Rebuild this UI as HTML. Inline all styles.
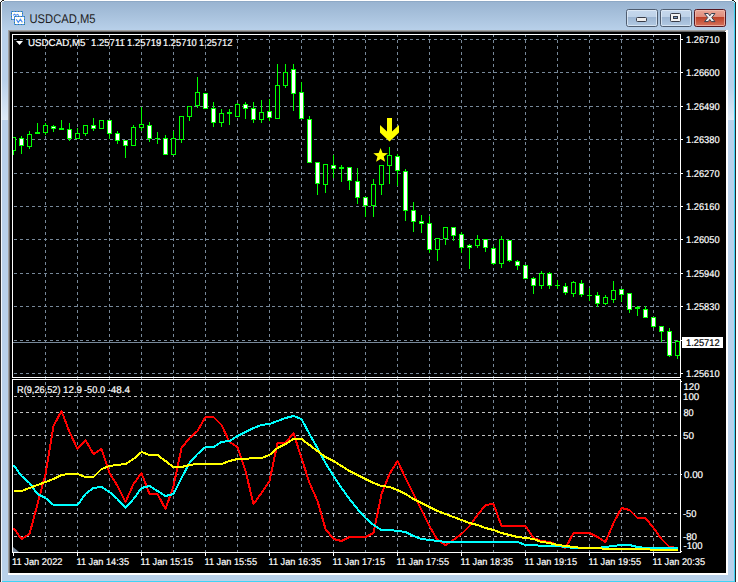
<!DOCTYPE html><html><head><meta charset="utf-8"><style>
html,body{margin:0;padding:0;width:738px;height:582px;overflow:hidden;background:#fff;}
svg{display:block;}
text{font-family:"Liberation Sans",sans-serif;text-rendering:geometricPrecision;}
</style></head><body>
<svg width="738" height="582" viewBox="0 0 738 582">
<defs><linearGradient id="tg" x1="0" y1="0" x2="0" y2="1"><stop offset="0" stop-color="#98b3d0"/><stop offset="1" stop-color="#b9d1ea"/></linearGradient><linearGradient id="btn" x1="0" y1="0" x2="0" y2="1"><stop offset="0" stop-color="#c6d8ed"/><stop offset="0.46" stop-color="#bed2e8"/><stop offset="0.47" stop-color="#9db6d3"/><stop offset="1" stop-color="#b4cbe4"/></linearGradient><linearGradient id="cls" x1="0" y1="0" x2="0" y2="1"><stop offset="0" stop-color="#eaa898"/><stop offset="0.46" stop-color="#de8b7b"/><stop offset="0.47" stop-color="#bd4128"/><stop offset="1" stop-color="#d77560"/></linearGradient></defs>
<g shape-rendering="crispEdges">
<rect x="0" y="1" width="736" height="581" fill="#b9d1ea"/>
<rect x="0" y="1" width="736" height="30" fill="url(#tg)"/>
<rect x="0" y="1" width="736" height="1" fill="#8ea9c6"/>
<rect x="0" y="2" width="1" height="580" fill="#2a2a2a"/>
<rect x="0" y="0" width="2" height="2" fill="#fff"/>
<rect x="2" y="0" width="2" height="1" fill="#1a1a1a"/><rect x="1" y="1" width="1" height="1" fill="#1a1a1a"/><rect x="0" y="2" width="1" height="1" fill="#1a1a1a"/>
<rect x="2" y="1" width="2" height="1" fill="#f0f4f8"/>
<rect x="734" y="0" width="4" height="3" fill="#fff"/>
<rect x="732" y="0" width="2" height="1" fill="#1a1a1a"/><rect x="734" y="1" width="1" height="1" fill="#1a1a1a"/><rect x="735" y="2" width="1" height="1" fill="#1a1a1a"/>
<rect x="732" y="1" width="2" height="1" fill="#bdeefa"/><rect x="734" y="2" width="1" height="1" fill="#bdeefa"/>
<rect x="1" y="2" width="1" height="580" fill="#f4f8fc"/>
<rect x="734" y="3" width="1" height="579" fill="#3fd3f5"/>
<rect x="735" y="3" width="1" height="579" fill="#2a2a2a"/>
<rect x="2" y="581" width="732" height="1" fill="#3fd3f5"/>
<linearGradient id="glow" x1="0" y1="0" x2="0" y2="1"><stop offset="0" stop-color="#dde9f5" stop-opacity="0"/><stop offset="1" stop-color="#dde9f5" stop-opacity="1"/></linearGradient>
<rect x="2" y="80" width="6" height="40" fill="url(#glow)"/>
<rect x="728" y="86" width="6" height="34" fill="url(#glow)"/>
<rect x="8" y="30" width="720" height="545" fill="#ffffff"/>
<rect x="8" y="30" width="718" height="1" fill="#a0a0a0"/>
<rect x="8" y="30" width="1" height="543" fill="#a0a0a0"/>
<rect x="9" y="31" width="716" height="1" fill="#696969"/>
<rect x="9" y="31" width="1" height="542" fill="#696969"/>
<rect x="10" y="32" width="716" height="541" fill="#000"/>
</g>
<g shape-rendering="crispEdges">
<path d="M45 35h1v2h-1zM45 40h1v3h-1zM45 46h1v3h-1zM45 52h1v3h-1zM45 58h1v3h-1zM45 64h1v3h-1zM45 70h1v3h-1zM45 76h1v3h-1zM45 82h1v3h-1zM45 88h1v3h-1zM45 94h1v3h-1zM45 100h1v3h-1zM45 106h1v3h-1zM45 112h1v3h-1zM45 118h1v3h-1zM45 124h1v3h-1zM45 130h1v3h-1zM45 136h1v3h-1zM45 142h1v3h-1zM45 148h1v3h-1zM45 154h1v3h-1zM45 160h1v3h-1zM45 166h1v3h-1zM45 172h1v3h-1zM45 178h1v3h-1zM45 184h1v3h-1zM45 190h1v3h-1zM45 196h1v3h-1zM45 202h1v3h-1zM45 208h1v3h-1zM45 214h1v3h-1zM45 220h1v3h-1zM45 226h1v3h-1zM45 232h1v3h-1zM45 238h1v3h-1zM45 244h1v3h-1zM45 250h1v3h-1zM45 256h1v3h-1zM45 262h1v3h-1zM45 268h1v3h-1zM45 274h1v3h-1zM45 280h1v3h-1zM45 286h1v3h-1zM45 292h1v3h-1zM45 298h1v3h-1zM45 304h1v3h-1zM45 310h1v3h-1zM45 316h1v3h-1zM45 322h1v3h-1zM45 328h1v3h-1zM45 334h1v3h-1zM45 340h1v3h-1zM45 346h1v3h-1zM45 352h1v3h-1zM45 358h1v3h-1zM45 364h1v3h-1zM45 370h1v3h-1zM45 376h1v3h-1zM45 382h1v3h-1zM45 388h1v3h-1zM45 394h1v3h-1zM45 400h1v3h-1zM45 406h1v3h-1zM45 412h1v3h-1zM45 418h1v3h-1zM45 424h1v3h-1zM45 430h1v3h-1zM45 436h1v3h-1zM45 442h1v3h-1zM45 448h1v3h-1zM45 454h1v3h-1zM45 460h1v3h-1zM45 466h1v3h-1zM45 472h1v3h-1zM45 478h1v3h-1zM45 484h1v3h-1zM45 490h1v3h-1zM45 496h1v3h-1zM45 502h1v3h-1zM45 508h1v3h-1zM45 514h1v3h-1zM45 520h1v3h-1zM45 526h1v3h-1zM45 532h1v3h-1zM45 538h1v3h-1zM45 544h1v3h-1zM45 550h1v2h-1z" fill="#778899"/>
<path d="M77 35h1v2h-1zM77 40h1v3h-1zM77 46h1v3h-1zM77 52h1v3h-1zM77 58h1v3h-1zM77 64h1v3h-1zM77 70h1v3h-1zM77 76h1v3h-1zM77 82h1v3h-1zM77 88h1v3h-1zM77 94h1v3h-1zM77 100h1v3h-1zM77 106h1v3h-1zM77 112h1v3h-1zM77 118h1v3h-1zM77 124h1v3h-1zM77 130h1v3h-1zM77 136h1v3h-1zM77 142h1v3h-1zM77 148h1v3h-1zM77 154h1v3h-1zM77 160h1v3h-1zM77 166h1v3h-1zM77 172h1v3h-1zM77 178h1v3h-1zM77 184h1v3h-1zM77 190h1v3h-1zM77 196h1v3h-1zM77 202h1v3h-1zM77 208h1v3h-1zM77 214h1v3h-1zM77 220h1v3h-1zM77 226h1v3h-1zM77 232h1v3h-1zM77 238h1v3h-1zM77 244h1v3h-1zM77 250h1v3h-1zM77 256h1v3h-1zM77 262h1v3h-1zM77 268h1v3h-1zM77 274h1v3h-1zM77 280h1v3h-1zM77 286h1v3h-1zM77 292h1v3h-1zM77 298h1v3h-1zM77 304h1v3h-1zM77 310h1v3h-1zM77 316h1v3h-1zM77 322h1v3h-1zM77 328h1v3h-1zM77 334h1v3h-1zM77 340h1v3h-1zM77 346h1v3h-1zM77 352h1v3h-1zM77 358h1v3h-1zM77 364h1v3h-1zM77 370h1v3h-1zM77 376h1v3h-1zM77 382h1v3h-1zM77 388h1v3h-1zM77 394h1v3h-1zM77 400h1v3h-1zM77 406h1v3h-1zM77 412h1v3h-1zM77 418h1v3h-1zM77 424h1v3h-1zM77 430h1v3h-1zM77 436h1v3h-1zM77 442h1v3h-1zM77 448h1v3h-1zM77 454h1v3h-1zM77 460h1v3h-1zM77 466h1v3h-1zM77 472h1v3h-1zM77 478h1v3h-1zM77 484h1v3h-1zM77 490h1v3h-1zM77 496h1v3h-1zM77 502h1v3h-1zM77 508h1v3h-1zM77 514h1v3h-1zM77 520h1v3h-1zM77 526h1v3h-1zM77 532h1v3h-1zM77 538h1v3h-1zM77 544h1v3h-1zM77 550h1v2h-1z" fill="#778899"/>
<path d="M109 35h1v2h-1zM109 40h1v3h-1zM109 46h1v3h-1zM109 52h1v3h-1zM109 58h1v3h-1zM109 64h1v3h-1zM109 70h1v3h-1zM109 76h1v3h-1zM109 82h1v3h-1zM109 88h1v3h-1zM109 94h1v3h-1zM109 100h1v3h-1zM109 106h1v3h-1zM109 112h1v3h-1zM109 118h1v3h-1zM109 124h1v3h-1zM109 130h1v3h-1zM109 136h1v3h-1zM109 142h1v3h-1zM109 148h1v3h-1zM109 154h1v3h-1zM109 160h1v3h-1zM109 166h1v3h-1zM109 172h1v3h-1zM109 178h1v3h-1zM109 184h1v3h-1zM109 190h1v3h-1zM109 196h1v3h-1zM109 202h1v3h-1zM109 208h1v3h-1zM109 214h1v3h-1zM109 220h1v3h-1zM109 226h1v3h-1zM109 232h1v3h-1zM109 238h1v3h-1zM109 244h1v3h-1zM109 250h1v3h-1zM109 256h1v3h-1zM109 262h1v3h-1zM109 268h1v3h-1zM109 274h1v3h-1zM109 280h1v3h-1zM109 286h1v3h-1zM109 292h1v3h-1zM109 298h1v3h-1zM109 304h1v3h-1zM109 310h1v3h-1zM109 316h1v3h-1zM109 322h1v3h-1zM109 328h1v3h-1zM109 334h1v3h-1zM109 340h1v3h-1zM109 346h1v3h-1zM109 352h1v3h-1zM109 358h1v3h-1zM109 364h1v3h-1zM109 370h1v3h-1zM109 376h1v3h-1zM109 382h1v3h-1zM109 388h1v3h-1zM109 394h1v3h-1zM109 400h1v3h-1zM109 406h1v3h-1zM109 412h1v3h-1zM109 418h1v3h-1zM109 424h1v3h-1zM109 430h1v3h-1zM109 436h1v3h-1zM109 442h1v3h-1zM109 448h1v3h-1zM109 454h1v3h-1zM109 460h1v3h-1zM109 466h1v3h-1zM109 472h1v3h-1zM109 478h1v3h-1zM109 484h1v3h-1zM109 490h1v3h-1zM109 496h1v3h-1zM109 502h1v3h-1zM109 508h1v3h-1zM109 514h1v3h-1zM109 520h1v3h-1zM109 526h1v3h-1zM109 532h1v3h-1zM109 538h1v3h-1zM109 544h1v3h-1zM109 550h1v2h-1z" fill="#778899"/>
<path d="M141 35h1v2h-1zM141 40h1v3h-1zM141 46h1v3h-1zM141 52h1v3h-1zM141 58h1v3h-1zM141 64h1v3h-1zM141 70h1v3h-1zM141 76h1v3h-1zM141 82h1v3h-1zM141 88h1v3h-1zM141 94h1v3h-1zM141 100h1v3h-1zM141 106h1v3h-1zM141 112h1v3h-1zM141 118h1v3h-1zM141 124h1v3h-1zM141 130h1v3h-1zM141 136h1v3h-1zM141 142h1v3h-1zM141 148h1v3h-1zM141 154h1v3h-1zM141 160h1v3h-1zM141 166h1v3h-1zM141 172h1v3h-1zM141 178h1v3h-1zM141 184h1v3h-1zM141 190h1v3h-1zM141 196h1v3h-1zM141 202h1v3h-1zM141 208h1v3h-1zM141 214h1v3h-1zM141 220h1v3h-1zM141 226h1v3h-1zM141 232h1v3h-1zM141 238h1v3h-1zM141 244h1v3h-1zM141 250h1v3h-1zM141 256h1v3h-1zM141 262h1v3h-1zM141 268h1v3h-1zM141 274h1v3h-1zM141 280h1v3h-1zM141 286h1v3h-1zM141 292h1v3h-1zM141 298h1v3h-1zM141 304h1v3h-1zM141 310h1v3h-1zM141 316h1v3h-1zM141 322h1v3h-1zM141 328h1v3h-1zM141 334h1v3h-1zM141 340h1v3h-1zM141 346h1v3h-1zM141 352h1v3h-1zM141 358h1v3h-1zM141 364h1v3h-1zM141 370h1v3h-1zM141 376h1v3h-1zM141 382h1v3h-1zM141 388h1v3h-1zM141 394h1v3h-1zM141 400h1v3h-1zM141 406h1v3h-1zM141 412h1v3h-1zM141 418h1v3h-1zM141 424h1v3h-1zM141 430h1v3h-1zM141 436h1v3h-1zM141 442h1v3h-1zM141 448h1v3h-1zM141 454h1v3h-1zM141 460h1v3h-1zM141 466h1v3h-1zM141 472h1v3h-1zM141 478h1v3h-1zM141 484h1v3h-1zM141 490h1v3h-1zM141 496h1v3h-1zM141 502h1v3h-1zM141 508h1v3h-1zM141 514h1v3h-1zM141 520h1v3h-1zM141 526h1v3h-1zM141 532h1v3h-1zM141 538h1v3h-1zM141 544h1v3h-1zM141 550h1v2h-1z" fill="#778899"/>
<path d="M173 35h1v2h-1zM173 40h1v3h-1zM173 46h1v3h-1zM173 52h1v3h-1zM173 58h1v3h-1zM173 64h1v3h-1zM173 70h1v3h-1zM173 76h1v3h-1zM173 82h1v3h-1zM173 88h1v3h-1zM173 94h1v3h-1zM173 100h1v3h-1zM173 106h1v3h-1zM173 112h1v3h-1zM173 118h1v3h-1zM173 124h1v3h-1zM173 130h1v3h-1zM173 136h1v3h-1zM173 142h1v3h-1zM173 148h1v3h-1zM173 154h1v3h-1zM173 160h1v3h-1zM173 166h1v3h-1zM173 172h1v3h-1zM173 178h1v3h-1zM173 184h1v3h-1zM173 190h1v3h-1zM173 196h1v3h-1zM173 202h1v3h-1zM173 208h1v3h-1zM173 214h1v3h-1zM173 220h1v3h-1zM173 226h1v3h-1zM173 232h1v3h-1zM173 238h1v3h-1zM173 244h1v3h-1zM173 250h1v3h-1zM173 256h1v3h-1zM173 262h1v3h-1zM173 268h1v3h-1zM173 274h1v3h-1zM173 280h1v3h-1zM173 286h1v3h-1zM173 292h1v3h-1zM173 298h1v3h-1zM173 304h1v3h-1zM173 310h1v3h-1zM173 316h1v3h-1zM173 322h1v3h-1zM173 328h1v3h-1zM173 334h1v3h-1zM173 340h1v3h-1zM173 346h1v3h-1zM173 352h1v3h-1zM173 358h1v3h-1zM173 364h1v3h-1zM173 370h1v3h-1zM173 376h1v3h-1zM173 382h1v3h-1zM173 388h1v3h-1zM173 394h1v3h-1zM173 400h1v3h-1zM173 406h1v3h-1zM173 412h1v3h-1zM173 418h1v3h-1zM173 424h1v3h-1zM173 430h1v3h-1zM173 436h1v3h-1zM173 442h1v3h-1zM173 448h1v3h-1zM173 454h1v3h-1zM173 460h1v3h-1zM173 466h1v3h-1zM173 472h1v3h-1zM173 478h1v3h-1zM173 484h1v3h-1zM173 490h1v3h-1zM173 496h1v3h-1zM173 502h1v3h-1zM173 508h1v3h-1zM173 514h1v3h-1zM173 520h1v3h-1zM173 526h1v3h-1zM173 532h1v3h-1zM173 538h1v3h-1zM173 544h1v3h-1zM173 550h1v2h-1z" fill="#778899"/>
<path d="M205 35h1v2h-1zM205 40h1v3h-1zM205 46h1v3h-1zM205 52h1v3h-1zM205 58h1v3h-1zM205 64h1v3h-1zM205 70h1v3h-1zM205 76h1v3h-1zM205 82h1v3h-1zM205 88h1v3h-1zM205 94h1v3h-1zM205 100h1v3h-1zM205 106h1v3h-1zM205 112h1v3h-1zM205 118h1v3h-1zM205 124h1v3h-1zM205 130h1v3h-1zM205 136h1v3h-1zM205 142h1v3h-1zM205 148h1v3h-1zM205 154h1v3h-1zM205 160h1v3h-1zM205 166h1v3h-1zM205 172h1v3h-1zM205 178h1v3h-1zM205 184h1v3h-1zM205 190h1v3h-1zM205 196h1v3h-1zM205 202h1v3h-1zM205 208h1v3h-1zM205 214h1v3h-1zM205 220h1v3h-1zM205 226h1v3h-1zM205 232h1v3h-1zM205 238h1v3h-1zM205 244h1v3h-1zM205 250h1v3h-1zM205 256h1v3h-1zM205 262h1v3h-1zM205 268h1v3h-1zM205 274h1v3h-1zM205 280h1v3h-1zM205 286h1v3h-1zM205 292h1v3h-1zM205 298h1v3h-1zM205 304h1v3h-1zM205 310h1v3h-1zM205 316h1v3h-1zM205 322h1v3h-1zM205 328h1v3h-1zM205 334h1v3h-1zM205 340h1v3h-1zM205 346h1v3h-1zM205 352h1v3h-1zM205 358h1v3h-1zM205 364h1v3h-1zM205 370h1v3h-1zM205 376h1v3h-1zM205 382h1v3h-1zM205 388h1v3h-1zM205 394h1v3h-1zM205 400h1v3h-1zM205 406h1v3h-1zM205 412h1v3h-1zM205 418h1v3h-1zM205 424h1v3h-1zM205 430h1v3h-1zM205 436h1v3h-1zM205 442h1v3h-1zM205 448h1v3h-1zM205 454h1v3h-1zM205 460h1v3h-1zM205 466h1v3h-1zM205 472h1v3h-1zM205 478h1v3h-1zM205 484h1v3h-1zM205 490h1v3h-1zM205 496h1v3h-1zM205 502h1v3h-1zM205 508h1v3h-1zM205 514h1v3h-1zM205 520h1v3h-1zM205 526h1v3h-1zM205 532h1v3h-1zM205 538h1v3h-1zM205 544h1v3h-1zM205 550h1v2h-1z" fill="#778899"/>
<path d="M237 35h1v2h-1zM237 40h1v3h-1zM237 46h1v3h-1zM237 52h1v3h-1zM237 58h1v3h-1zM237 64h1v3h-1zM237 70h1v3h-1zM237 76h1v3h-1zM237 82h1v3h-1zM237 88h1v3h-1zM237 94h1v3h-1zM237 100h1v3h-1zM237 106h1v3h-1zM237 112h1v3h-1zM237 118h1v3h-1zM237 124h1v3h-1zM237 130h1v3h-1zM237 136h1v3h-1zM237 142h1v3h-1zM237 148h1v3h-1zM237 154h1v3h-1zM237 160h1v3h-1zM237 166h1v3h-1zM237 172h1v3h-1zM237 178h1v3h-1zM237 184h1v3h-1zM237 190h1v3h-1zM237 196h1v3h-1zM237 202h1v3h-1zM237 208h1v3h-1zM237 214h1v3h-1zM237 220h1v3h-1zM237 226h1v3h-1zM237 232h1v3h-1zM237 238h1v3h-1zM237 244h1v3h-1zM237 250h1v3h-1zM237 256h1v3h-1zM237 262h1v3h-1zM237 268h1v3h-1zM237 274h1v3h-1zM237 280h1v3h-1zM237 286h1v3h-1zM237 292h1v3h-1zM237 298h1v3h-1zM237 304h1v3h-1zM237 310h1v3h-1zM237 316h1v3h-1zM237 322h1v3h-1zM237 328h1v3h-1zM237 334h1v3h-1zM237 340h1v3h-1zM237 346h1v3h-1zM237 352h1v3h-1zM237 358h1v3h-1zM237 364h1v3h-1zM237 370h1v3h-1zM237 376h1v3h-1zM237 382h1v3h-1zM237 388h1v3h-1zM237 394h1v3h-1zM237 400h1v3h-1zM237 406h1v3h-1zM237 412h1v3h-1zM237 418h1v3h-1zM237 424h1v3h-1zM237 430h1v3h-1zM237 436h1v3h-1zM237 442h1v3h-1zM237 448h1v3h-1zM237 454h1v3h-1zM237 460h1v3h-1zM237 466h1v3h-1zM237 472h1v3h-1zM237 478h1v3h-1zM237 484h1v3h-1zM237 490h1v3h-1zM237 496h1v3h-1zM237 502h1v3h-1zM237 508h1v3h-1zM237 514h1v3h-1zM237 520h1v3h-1zM237 526h1v3h-1zM237 532h1v3h-1zM237 538h1v3h-1zM237 544h1v3h-1zM237 550h1v2h-1z" fill="#778899"/>
<path d="M269 35h1v2h-1zM269 40h1v3h-1zM269 46h1v3h-1zM269 52h1v3h-1zM269 58h1v3h-1zM269 64h1v3h-1zM269 70h1v3h-1zM269 76h1v3h-1zM269 82h1v3h-1zM269 88h1v3h-1zM269 94h1v3h-1zM269 100h1v3h-1zM269 106h1v3h-1zM269 112h1v3h-1zM269 118h1v3h-1zM269 124h1v3h-1zM269 130h1v3h-1zM269 136h1v3h-1zM269 142h1v3h-1zM269 148h1v3h-1zM269 154h1v3h-1zM269 160h1v3h-1zM269 166h1v3h-1zM269 172h1v3h-1zM269 178h1v3h-1zM269 184h1v3h-1zM269 190h1v3h-1zM269 196h1v3h-1zM269 202h1v3h-1zM269 208h1v3h-1zM269 214h1v3h-1zM269 220h1v3h-1zM269 226h1v3h-1zM269 232h1v3h-1zM269 238h1v3h-1zM269 244h1v3h-1zM269 250h1v3h-1zM269 256h1v3h-1zM269 262h1v3h-1zM269 268h1v3h-1zM269 274h1v3h-1zM269 280h1v3h-1zM269 286h1v3h-1zM269 292h1v3h-1zM269 298h1v3h-1zM269 304h1v3h-1zM269 310h1v3h-1zM269 316h1v3h-1zM269 322h1v3h-1zM269 328h1v3h-1zM269 334h1v3h-1zM269 340h1v3h-1zM269 346h1v3h-1zM269 352h1v3h-1zM269 358h1v3h-1zM269 364h1v3h-1zM269 370h1v3h-1zM269 376h1v3h-1zM269 382h1v3h-1zM269 388h1v3h-1zM269 394h1v3h-1zM269 400h1v3h-1zM269 406h1v3h-1zM269 412h1v3h-1zM269 418h1v3h-1zM269 424h1v3h-1zM269 430h1v3h-1zM269 436h1v3h-1zM269 442h1v3h-1zM269 448h1v3h-1zM269 454h1v3h-1zM269 460h1v3h-1zM269 466h1v3h-1zM269 472h1v3h-1zM269 478h1v3h-1zM269 484h1v3h-1zM269 490h1v3h-1zM269 496h1v3h-1zM269 502h1v3h-1zM269 508h1v3h-1zM269 514h1v3h-1zM269 520h1v3h-1zM269 526h1v3h-1zM269 532h1v3h-1zM269 538h1v3h-1zM269 544h1v3h-1zM269 550h1v2h-1z" fill="#778899"/>
<path d="M301 35h1v2h-1zM301 40h1v3h-1zM301 46h1v3h-1zM301 52h1v3h-1zM301 58h1v3h-1zM301 64h1v3h-1zM301 70h1v3h-1zM301 76h1v3h-1zM301 82h1v3h-1zM301 88h1v3h-1zM301 94h1v3h-1zM301 100h1v3h-1zM301 106h1v3h-1zM301 112h1v3h-1zM301 118h1v3h-1zM301 124h1v3h-1zM301 130h1v3h-1zM301 136h1v3h-1zM301 142h1v3h-1zM301 148h1v3h-1zM301 154h1v3h-1zM301 160h1v3h-1zM301 166h1v3h-1zM301 172h1v3h-1zM301 178h1v3h-1zM301 184h1v3h-1zM301 190h1v3h-1zM301 196h1v3h-1zM301 202h1v3h-1zM301 208h1v3h-1zM301 214h1v3h-1zM301 220h1v3h-1zM301 226h1v3h-1zM301 232h1v3h-1zM301 238h1v3h-1zM301 244h1v3h-1zM301 250h1v3h-1zM301 256h1v3h-1zM301 262h1v3h-1zM301 268h1v3h-1zM301 274h1v3h-1zM301 280h1v3h-1zM301 286h1v3h-1zM301 292h1v3h-1zM301 298h1v3h-1zM301 304h1v3h-1zM301 310h1v3h-1zM301 316h1v3h-1zM301 322h1v3h-1zM301 328h1v3h-1zM301 334h1v3h-1zM301 340h1v3h-1zM301 346h1v3h-1zM301 352h1v3h-1zM301 358h1v3h-1zM301 364h1v3h-1zM301 370h1v3h-1zM301 376h1v3h-1zM301 382h1v3h-1zM301 388h1v3h-1zM301 394h1v3h-1zM301 400h1v3h-1zM301 406h1v3h-1zM301 412h1v3h-1zM301 418h1v3h-1zM301 424h1v3h-1zM301 430h1v3h-1zM301 436h1v3h-1zM301 442h1v3h-1zM301 448h1v3h-1zM301 454h1v3h-1zM301 460h1v3h-1zM301 466h1v3h-1zM301 472h1v3h-1zM301 478h1v3h-1zM301 484h1v3h-1zM301 490h1v3h-1zM301 496h1v3h-1zM301 502h1v3h-1zM301 508h1v3h-1zM301 514h1v3h-1zM301 520h1v3h-1zM301 526h1v3h-1zM301 532h1v3h-1zM301 538h1v3h-1zM301 544h1v3h-1zM301 550h1v2h-1z" fill="#778899"/>
<path d="M333 35h1v2h-1zM333 40h1v3h-1zM333 46h1v3h-1zM333 52h1v3h-1zM333 58h1v3h-1zM333 64h1v3h-1zM333 70h1v3h-1zM333 76h1v3h-1zM333 82h1v3h-1zM333 88h1v3h-1zM333 94h1v3h-1zM333 100h1v3h-1zM333 106h1v3h-1zM333 112h1v3h-1zM333 118h1v3h-1zM333 124h1v3h-1zM333 130h1v3h-1zM333 136h1v3h-1zM333 142h1v3h-1zM333 148h1v3h-1zM333 154h1v3h-1zM333 160h1v3h-1zM333 166h1v3h-1zM333 172h1v3h-1zM333 178h1v3h-1zM333 184h1v3h-1zM333 190h1v3h-1zM333 196h1v3h-1zM333 202h1v3h-1zM333 208h1v3h-1zM333 214h1v3h-1zM333 220h1v3h-1zM333 226h1v3h-1zM333 232h1v3h-1zM333 238h1v3h-1zM333 244h1v3h-1zM333 250h1v3h-1zM333 256h1v3h-1zM333 262h1v3h-1zM333 268h1v3h-1zM333 274h1v3h-1zM333 280h1v3h-1zM333 286h1v3h-1zM333 292h1v3h-1zM333 298h1v3h-1zM333 304h1v3h-1zM333 310h1v3h-1zM333 316h1v3h-1zM333 322h1v3h-1zM333 328h1v3h-1zM333 334h1v3h-1zM333 340h1v3h-1zM333 346h1v3h-1zM333 352h1v3h-1zM333 358h1v3h-1zM333 364h1v3h-1zM333 370h1v3h-1zM333 376h1v3h-1zM333 382h1v3h-1zM333 388h1v3h-1zM333 394h1v3h-1zM333 400h1v3h-1zM333 406h1v3h-1zM333 412h1v3h-1zM333 418h1v3h-1zM333 424h1v3h-1zM333 430h1v3h-1zM333 436h1v3h-1zM333 442h1v3h-1zM333 448h1v3h-1zM333 454h1v3h-1zM333 460h1v3h-1zM333 466h1v3h-1zM333 472h1v3h-1zM333 478h1v3h-1zM333 484h1v3h-1zM333 490h1v3h-1zM333 496h1v3h-1zM333 502h1v3h-1zM333 508h1v3h-1zM333 514h1v3h-1zM333 520h1v3h-1zM333 526h1v3h-1zM333 532h1v3h-1zM333 538h1v3h-1zM333 544h1v3h-1zM333 550h1v2h-1z" fill="#778899"/>
<path d="M365 35h1v2h-1zM365 40h1v3h-1zM365 46h1v3h-1zM365 52h1v3h-1zM365 58h1v3h-1zM365 64h1v3h-1zM365 70h1v3h-1zM365 76h1v3h-1zM365 82h1v3h-1zM365 88h1v3h-1zM365 94h1v3h-1zM365 100h1v3h-1zM365 106h1v3h-1zM365 112h1v3h-1zM365 118h1v3h-1zM365 124h1v3h-1zM365 130h1v3h-1zM365 136h1v3h-1zM365 142h1v3h-1zM365 148h1v3h-1zM365 154h1v3h-1zM365 160h1v3h-1zM365 166h1v3h-1zM365 172h1v3h-1zM365 178h1v3h-1zM365 184h1v3h-1zM365 190h1v3h-1zM365 196h1v3h-1zM365 202h1v3h-1zM365 208h1v3h-1zM365 214h1v3h-1zM365 220h1v3h-1zM365 226h1v3h-1zM365 232h1v3h-1zM365 238h1v3h-1zM365 244h1v3h-1zM365 250h1v3h-1zM365 256h1v3h-1zM365 262h1v3h-1zM365 268h1v3h-1zM365 274h1v3h-1zM365 280h1v3h-1zM365 286h1v3h-1zM365 292h1v3h-1zM365 298h1v3h-1zM365 304h1v3h-1zM365 310h1v3h-1zM365 316h1v3h-1zM365 322h1v3h-1zM365 328h1v3h-1zM365 334h1v3h-1zM365 340h1v3h-1zM365 346h1v3h-1zM365 352h1v3h-1zM365 358h1v3h-1zM365 364h1v3h-1zM365 370h1v3h-1zM365 376h1v3h-1zM365 382h1v3h-1zM365 388h1v3h-1zM365 394h1v3h-1zM365 400h1v3h-1zM365 406h1v3h-1zM365 412h1v3h-1zM365 418h1v3h-1zM365 424h1v3h-1zM365 430h1v3h-1zM365 436h1v3h-1zM365 442h1v3h-1zM365 448h1v3h-1zM365 454h1v3h-1zM365 460h1v3h-1zM365 466h1v3h-1zM365 472h1v3h-1zM365 478h1v3h-1zM365 484h1v3h-1zM365 490h1v3h-1zM365 496h1v3h-1zM365 502h1v3h-1zM365 508h1v3h-1zM365 514h1v3h-1zM365 520h1v3h-1zM365 526h1v3h-1zM365 532h1v3h-1zM365 538h1v3h-1zM365 544h1v3h-1zM365 550h1v2h-1z" fill="#778899"/>
<path d="M397 35h1v2h-1zM397 40h1v3h-1zM397 46h1v3h-1zM397 52h1v3h-1zM397 58h1v3h-1zM397 64h1v3h-1zM397 70h1v3h-1zM397 76h1v3h-1zM397 82h1v3h-1zM397 88h1v3h-1zM397 94h1v3h-1zM397 100h1v3h-1zM397 106h1v3h-1zM397 112h1v3h-1zM397 118h1v3h-1zM397 124h1v3h-1zM397 130h1v3h-1zM397 136h1v3h-1zM397 142h1v3h-1zM397 148h1v3h-1zM397 154h1v3h-1zM397 160h1v3h-1zM397 166h1v3h-1zM397 172h1v3h-1zM397 178h1v3h-1zM397 184h1v3h-1zM397 190h1v3h-1zM397 196h1v3h-1zM397 202h1v3h-1zM397 208h1v3h-1zM397 214h1v3h-1zM397 220h1v3h-1zM397 226h1v3h-1zM397 232h1v3h-1zM397 238h1v3h-1zM397 244h1v3h-1zM397 250h1v3h-1zM397 256h1v3h-1zM397 262h1v3h-1zM397 268h1v3h-1zM397 274h1v3h-1zM397 280h1v3h-1zM397 286h1v3h-1zM397 292h1v3h-1zM397 298h1v3h-1zM397 304h1v3h-1zM397 310h1v3h-1zM397 316h1v3h-1zM397 322h1v3h-1zM397 328h1v3h-1zM397 334h1v3h-1zM397 340h1v3h-1zM397 346h1v3h-1zM397 352h1v3h-1zM397 358h1v3h-1zM397 364h1v3h-1zM397 370h1v3h-1zM397 376h1v3h-1zM397 382h1v3h-1zM397 388h1v3h-1zM397 394h1v3h-1zM397 400h1v3h-1zM397 406h1v3h-1zM397 412h1v3h-1zM397 418h1v3h-1zM397 424h1v3h-1zM397 430h1v3h-1zM397 436h1v3h-1zM397 442h1v3h-1zM397 448h1v3h-1zM397 454h1v3h-1zM397 460h1v3h-1zM397 466h1v3h-1zM397 472h1v3h-1zM397 478h1v3h-1zM397 484h1v3h-1zM397 490h1v3h-1zM397 496h1v3h-1zM397 502h1v3h-1zM397 508h1v3h-1zM397 514h1v3h-1zM397 520h1v3h-1zM397 526h1v3h-1zM397 532h1v3h-1zM397 538h1v3h-1zM397 544h1v3h-1zM397 550h1v2h-1z" fill="#778899"/>
<path d="M429 35h1v2h-1zM429 40h1v3h-1zM429 46h1v3h-1zM429 52h1v3h-1zM429 58h1v3h-1zM429 64h1v3h-1zM429 70h1v3h-1zM429 76h1v3h-1zM429 82h1v3h-1zM429 88h1v3h-1zM429 94h1v3h-1zM429 100h1v3h-1zM429 106h1v3h-1zM429 112h1v3h-1zM429 118h1v3h-1zM429 124h1v3h-1zM429 130h1v3h-1zM429 136h1v3h-1zM429 142h1v3h-1zM429 148h1v3h-1zM429 154h1v3h-1zM429 160h1v3h-1zM429 166h1v3h-1zM429 172h1v3h-1zM429 178h1v3h-1zM429 184h1v3h-1zM429 190h1v3h-1zM429 196h1v3h-1zM429 202h1v3h-1zM429 208h1v3h-1zM429 214h1v3h-1zM429 220h1v3h-1zM429 226h1v3h-1zM429 232h1v3h-1zM429 238h1v3h-1zM429 244h1v3h-1zM429 250h1v3h-1zM429 256h1v3h-1zM429 262h1v3h-1zM429 268h1v3h-1zM429 274h1v3h-1zM429 280h1v3h-1zM429 286h1v3h-1zM429 292h1v3h-1zM429 298h1v3h-1zM429 304h1v3h-1zM429 310h1v3h-1zM429 316h1v3h-1zM429 322h1v3h-1zM429 328h1v3h-1zM429 334h1v3h-1zM429 340h1v3h-1zM429 346h1v3h-1zM429 352h1v3h-1zM429 358h1v3h-1zM429 364h1v3h-1zM429 370h1v3h-1zM429 376h1v3h-1zM429 382h1v3h-1zM429 388h1v3h-1zM429 394h1v3h-1zM429 400h1v3h-1zM429 406h1v3h-1zM429 412h1v3h-1zM429 418h1v3h-1zM429 424h1v3h-1zM429 430h1v3h-1zM429 436h1v3h-1zM429 442h1v3h-1zM429 448h1v3h-1zM429 454h1v3h-1zM429 460h1v3h-1zM429 466h1v3h-1zM429 472h1v3h-1zM429 478h1v3h-1zM429 484h1v3h-1zM429 490h1v3h-1zM429 496h1v3h-1zM429 502h1v3h-1zM429 508h1v3h-1zM429 514h1v3h-1zM429 520h1v3h-1zM429 526h1v3h-1zM429 532h1v3h-1zM429 538h1v3h-1zM429 544h1v3h-1zM429 550h1v2h-1z" fill="#778899"/>
<path d="M461 35h1v2h-1zM461 40h1v3h-1zM461 46h1v3h-1zM461 52h1v3h-1zM461 58h1v3h-1zM461 64h1v3h-1zM461 70h1v3h-1zM461 76h1v3h-1zM461 82h1v3h-1zM461 88h1v3h-1zM461 94h1v3h-1zM461 100h1v3h-1zM461 106h1v3h-1zM461 112h1v3h-1zM461 118h1v3h-1zM461 124h1v3h-1zM461 130h1v3h-1zM461 136h1v3h-1zM461 142h1v3h-1zM461 148h1v3h-1zM461 154h1v3h-1zM461 160h1v3h-1zM461 166h1v3h-1zM461 172h1v3h-1zM461 178h1v3h-1zM461 184h1v3h-1zM461 190h1v3h-1zM461 196h1v3h-1zM461 202h1v3h-1zM461 208h1v3h-1zM461 214h1v3h-1zM461 220h1v3h-1zM461 226h1v3h-1zM461 232h1v3h-1zM461 238h1v3h-1zM461 244h1v3h-1zM461 250h1v3h-1zM461 256h1v3h-1zM461 262h1v3h-1zM461 268h1v3h-1zM461 274h1v3h-1zM461 280h1v3h-1zM461 286h1v3h-1zM461 292h1v3h-1zM461 298h1v3h-1zM461 304h1v3h-1zM461 310h1v3h-1zM461 316h1v3h-1zM461 322h1v3h-1zM461 328h1v3h-1zM461 334h1v3h-1zM461 340h1v3h-1zM461 346h1v3h-1zM461 352h1v3h-1zM461 358h1v3h-1zM461 364h1v3h-1zM461 370h1v3h-1zM461 376h1v3h-1zM461 382h1v3h-1zM461 388h1v3h-1zM461 394h1v3h-1zM461 400h1v3h-1zM461 406h1v3h-1zM461 412h1v3h-1zM461 418h1v3h-1zM461 424h1v3h-1zM461 430h1v3h-1zM461 436h1v3h-1zM461 442h1v3h-1zM461 448h1v3h-1zM461 454h1v3h-1zM461 460h1v3h-1zM461 466h1v3h-1zM461 472h1v3h-1zM461 478h1v3h-1zM461 484h1v3h-1zM461 490h1v3h-1zM461 496h1v3h-1zM461 502h1v3h-1zM461 508h1v3h-1zM461 514h1v3h-1zM461 520h1v3h-1zM461 526h1v3h-1zM461 532h1v3h-1zM461 538h1v3h-1zM461 544h1v3h-1zM461 550h1v2h-1z" fill="#778899"/>
<path d="M493 35h1v2h-1zM493 40h1v3h-1zM493 46h1v3h-1zM493 52h1v3h-1zM493 58h1v3h-1zM493 64h1v3h-1zM493 70h1v3h-1zM493 76h1v3h-1zM493 82h1v3h-1zM493 88h1v3h-1zM493 94h1v3h-1zM493 100h1v3h-1zM493 106h1v3h-1zM493 112h1v3h-1zM493 118h1v3h-1zM493 124h1v3h-1zM493 130h1v3h-1zM493 136h1v3h-1zM493 142h1v3h-1zM493 148h1v3h-1zM493 154h1v3h-1zM493 160h1v3h-1zM493 166h1v3h-1zM493 172h1v3h-1zM493 178h1v3h-1zM493 184h1v3h-1zM493 190h1v3h-1zM493 196h1v3h-1zM493 202h1v3h-1zM493 208h1v3h-1zM493 214h1v3h-1zM493 220h1v3h-1zM493 226h1v3h-1zM493 232h1v3h-1zM493 238h1v3h-1zM493 244h1v3h-1zM493 250h1v3h-1zM493 256h1v3h-1zM493 262h1v3h-1zM493 268h1v3h-1zM493 274h1v3h-1zM493 280h1v3h-1zM493 286h1v3h-1zM493 292h1v3h-1zM493 298h1v3h-1zM493 304h1v3h-1zM493 310h1v3h-1zM493 316h1v3h-1zM493 322h1v3h-1zM493 328h1v3h-1zM493 334h1v3h-1zM493 340h1v3h-1zM493 346h1v3h-1zM493 352h1v3h-1zM493 358h1v3h-1zM493 364h1v3h-1zM493 370h1v3h-1zM493 376h1v3h-1zM493 382h1v3h-1zM493 388h1v3h-1zM493 394h1v3h-1zM493 400h1v3h-1zM493 406h1v3h-1zM493 412h1v3h-1zM493 418h1v3h-1zM493 424h1v3h-1zM493 430h1v3h-1zM493 436h1v3h-1zM493 442h1v3h-1zM493 448h1v3h-1zM493 454h1v3h-1zM493 460h1v3h-1zM493 466h1v3h-1zM493 472h1v3h-1zM493 478h1v3h-1zM493 484h1v3h-1zM493 490h1v3h-1zM493 496h1v3h-1zM493 502h1v3h-1zM493 508h1v3h-1zM493 514h1v3h-1zM493 520h1v3h-1zM493 526h1v3h-1zM493 532h1v3h-1zM493 538h1v3h-1zM493 544h1v3h-1zM493 550h1v2h-1z" fill="#778899"/>
<path d="M525 35h1v2h-1zM525 40h1v3h-1zM525 46h1v3h-1zM525 52h1v3h-1zM525 58h1v3h-1zM525 64h1v3h-1zM525 70h1v3h-1zM525 76h1v3h-1zM525 82h1v3h-1zM525 88h1v3h-1zM525 94h1v3h-1zM525 100h1v3h-1zM525 106h1v3h-1zM525 112h1v3h-1zM525 118h1v3h-1zM525 124h1v3h-1zM525 130h1v3h-1zM525 136h1v3h-1zM525 142h1v3h-1zM525 148h1v3h-1zM525 154h1v3h-1zM525 160h1v3h-1zM525 166h1v3h-1zM525 172h1v3h-1zM525 178h1v3h-1zM525 184h1v3h-1zM525 190h1v3h-1zM525 196h1v3h-1zM525 202h1v3h-1zM525 208h1v3h-1zM525 214h1v3h-1zM525 220h1v3h-1zM525 226h1v3h-1zM525 232h1v3h-1zM525 238h1v3h-1zM525 244h1v3h-1zM525 250h1v3h-1zM525 256h1v3h-1zM525 262h1v3h-1zM525 268h1v3h-1zM525 274h1v3h-1zM525 280h1v3h-1zM525 286h1v3h-1zM525 292h1v3h-1zM525 298h1v3h-1zM525 304h1v3h-1zM525 310h1v3h-1zM525 316h1v3h-1zM525 322h1v3h-1zM525 328h1v3h-1zM525 334h1v3h-1zM525 340h1v3h-1zM525 346h1v3h-1zM525 352h1v3h-1zM525 358h1v3h-1zM525 364h1v3h-1zM525 370h1v3h-1zM525 376h1v3h-1zM525 382h1v3h-1zM525 388h1v3h-1zM525 394h1v3h-1zM525 400h1v3h-1zM525 406h1v3h-1zM525 412h1v3h-1zM525 418h1v3h-1zM525 424h1v3h-1zM525 430h1v3h-1zM525 436h1v3h-1zM525 442h1v3h-1zM525 448h1v3h-1zM525 454h1v3h-1zM525 460h1v3h-1zM525 466h1v3h-1zM525 472h1v3h-1zM525 478h1v3h-1zM525 484h1v3h-1zM525 490h1v3h-1zM525 496h1v3h-1zM525 502h1v3h-1zM525 508h1v3h-1zM525 514h1v3h-1zM525 520h1v3h-1zM525 526h1v3h-1zM525 532h1v3h-1zM525 538h1v3h-1zM525 544h1v3h-1zM525 550h1v2h-1z" fill="#778899"/>
<path d="M557 35h1v2h-1zM557 40h1v3h-1zM557 46h1v3h-1zM557 52h1v3h-1zM557 58h1v3h-1zM557 64h1v3h-1zM557 70h1v3h-1zM557 76h1v3h-1zM557 82h1v3h-1zM557 88h1v3h-1zM557 94h1v3h-1zM557 100h1v3h-1zM557 106h1v3h-1zM557 112h1v3h-1zM557 118h1v3h-1zM557 124h1v3h-1zM557 130h1v3h-1zM557 136h1v3h-1zM557 142h1v3h-1zM557 148h1v3h-1zM557 154h1v3h-1zM557 160h1v3h-1zM557 166h1v3h-1zM557 172h1v3h-1zM557 178h1v3h-1zM557 184h1v3h-1zM557 190h1v3h-1zM557 196h1v3h-1zM557 202h1v3h-1zM557 208h1v3h-1zM557 214h1v3h-1zM557 220h1v3h-1zM557 226h1v3h-1zM557 232h1v3h-1zM557 238h1v3h-1zM557 244h1v3h-1zM557 250h1v3h-1zM557 256h1v3h-1zM557 262h1v3h-1zM557 268h1v3h-1zM557 274h1v3h-1zM557 280h1v3h-1zM557 286h1v3h-1zM557 292h1v3h-1zM557 298h1v3h-1zM557 304h1v3h-1zM557 310h1v3h-1zM557 316h1v3h-1zM557 322h1v3h-1zM557 328h1v3h-1zM557 334h1v3h-1zM557 340h1v3h-1zM557 346h1v3h-1zM557 352h1v3h-1zM557 358h1v3h-1zM557 364h1v3h-1zM557 370h1v3h-1zM557 376h1v3h-1zM557 382h1v3h-1zM557 388h1v3h-1zM557 394h1v3h-1zM557 400h1v3h-1zM557 406h1v3h-1zM557 412h1v3h-1zM557 418h1v3h-1zM557 424h1v3h-1zM557 430h1v3h-1zM557 436h1v3h-1zM557 442h1v3h-1zM557 448h1v3h-1zM557 454h1v3h-1zM557 460h1v3h-1zM557 466h1v3h-1zM557 472h1v3h-1zM557 478h1v3h-1zM557 484h1v3h-1zM557 490h1v3h-1zM557 496h1v3h-1zM557 502h1v3h-1zM557 508h1v3h-1zM557 514h1v3h-1zM557 520h1v3h-1zM557 526h1v3h-1zM557 532h1v3h-1zM557 538h1v3h-1zM557 544h1v3h-1zM557 550h1v2h-1z" fill="#778899"/>
<path d="M589 35h1v2h-1zM589 40h1v3h-1zM589 46h1v3h-1zM589 52h1v3h-1zM589 58h1v3h-1zM589 64h1v3h-1zM589 70h1v3h-1zM589 76h1v3h-1zM589 82h1v3h-1zM589 88h1v3h-1zM589 94h1v3h-1zM589 100h1v3h-1zM589 106h1v3h-1zM589 112h1v3h-1zM589 118h1v3h-1zM589 124h1v3h-1zM589 130h1v3h-1zM589 136h1v3h-1zM589 142h1v3h-1zM589 148h1v3h-1zM589 154h1v3h-1zM589 160h1v3h-1zM589 166h1v3h-1zM589 172h1v3h-1zM589 178h1v3h-1zM589 184h1v3h-1zM589 190h1v3h-1zM589 196h1v3h-1zM589 202h1v3h-1zM589 208h1v3h-1zM589 214h1v3h-1zM589 220h1v3h-1zM589 226h1v3h-1zM589 232h1v3h-1zM589 238h1v3h-1zM589 244h1v3h-1zM589 250h1v3h-1zM589 256h1v3h-1zM589 262h1v3h-1zM589 268h1v3h-1zM589 274h1v3h-1zM589 280h1v3h-1zM589 286h1v3h-1zM589 292h1v3h-1zM589 298h1v3h-1zM589 304h1v3h-1zM589 310h1v3h-1zM589 316h1v3h-1zM589 322h1v3h-1zM589 328h1v3h-1zM589 334h1v3h-1zM589 340h1v3h-1zM589 346h1v3h-1zM589 352h1v3h-1zM589 358h1v3h-1zM589 364h1v3h-1zM589 370h1v3h-1zM589 376h1v3h-1zM589 382h1v3h-1zM589 388h1v3h-1zM589 394h1v3h-1zM589 400h1v3h-1zM589 406h1v3h-1zM589 412h1v3h-1zM589 418h1v3h-1zM589 424h1v3h-1zM589 430h1v3h-1zM589 436h1v3h-1zM589 442h1v3h-1zM589 448h1v3h-1zM589 454h1v3h-1zM589 460h1v3h-1zM589 466h1v3h-1zM589 472h1v3h-1zM589 478h1v3h-1zM589 484h1v3h-1zM589 490h1v3h-1zM589 496h1v3h-1zM589 502h1v3h-1zM589 508h1v3h-1zM589 514h1v3h-1zM589 520h1v3h-1zM589 526h1v3h-1zM589 532h1v3h-1zM589 538h1v3h-1zM589 544h1v3h-1zM589 550h1v2h-1z" fill="#778899"/>
<path d="M621 35h1v2h-1zM621 40h1v3h-1zM621 46h1v3h-1zM621 52h1v3h-1zM621 58h1v3h-1zM621 64h1v3h-1zM621 70h1v3h-1zM621 76h1v3h-1zM621 82h1v3h-1zM621 88h1v3h-1zM621 94h1v3h-1zM621 100h1v3h-1zM621 106h1v3h-1zM621 112h1v3h-1zM621 118h1v3h-1zM621 124h1v3h-1zM621 130h1v3h-1zM621 136h1v3h-1zM621 142h1v3h-1zM621 148h1v3h-1zM621 154h1v3h-1zM621 160h1v3h-1zM621 166h1v3h-1zM621 172h1v3h-1zM621 178h1v3h-1zM621 184h1v3h-1zM621 190h1v3h-1zM621 196h1v3h-1zM621 202h1v3h-1zM621 208h1v3h-1zM621 214h1v3h-1zM621 220h1v3h-1zM621 226h1v3h-1zM621 232h1v3h-1zM621 238h1v3h-1zM621 244h1v3h-1zM621 250h1v3h-1zM621 256h1v3h-1zM621 262h1v3h-1zM621 268h1v3h-1zM621 274h1v3h-1zM621 280h1v3h-1zM621 286h1v3h-1zM621 292h1v3h-1zM621 298h1v3h-1zM621 304h1v3h-1zM621 310h1v3h-1zM621 316h1v3h-1zM621 322h1v3h-1zM621 328h1v3h-1zM621 334h1v3h-1zM621 340h1v3h-1zM621 346h1v3h-1zM621 352h1v3h-1zM621 358h1v3h-1zM621 364h1v3h-1zM621 370h1v3h-1zM621 376h1v3h-1zM621 382h1v3h-1zM621 388h1v3h-1zM621 394h1v3h-1zM621 400h1v3h-1zM621 406h1v3h-1zM621 412h1v3h-1zM621 418h1v3h-1zM621 424h1v3h-1zM621 430h1v3h-1zM621 436h1v3h-1zM621 442h1v3h-1zM621 448h1v3h-1zM621 454h1v3h-1zM621 460h1v3h-1zM621 466h1v3h-1zM621 472h1v3h-1zM621 478h1v3h-1zM621 484h1v3h-1zM621 490h1v3h-1zM621 496h1v3h-1zM621 502h1v3h-1zM621 508h1v3h-1zM621 514h1v3h-1zM621 520h1v3h-1zM621 526h1v3h-1zM621 532h1v3h-1zM621 538h1v3h-1zM621 544h1v3h-1zM621 550h1v2h-1z" fill="#778899"/>
<path d="M653 35h1v2h-1zM653 40h1v3h-1zM653 46h1v3h-1zM653 52h1v3h-1zM653 58h1v3h-1zM653 64h1v3h-1zM653 70h1v3h-1zM653 76h1v3h-1zM653 82h1v3h-1zM653 88h1v3h-1zM653 94h1v3h-1zM653 100h1v3h-1zM653 106h1v3h-1zM653 112h1v3h-1zM653 118h1v3h-1zM653 124h1v3h-1zM653 130h1v3h-1zM653 136h1v3h-1zM653 142h1v3h-1zM653 148h1v3h-1zM653 154h1v3h-1zM653 160h1v3h-1zM653 166h1v3h-1zM653 172h1v3h-1zM653 178h1v3h-1zM653 184h1v3h-1zM653 190h1v3h-1zM653 196h1v3h-1zM653 202h1v3h-1zM653 208h1v3h-1zM653 214h1v3h-1zM653 220h1v3h-1zM653 226h1v3h-1zM653 232h1v3h-1zM653 238h1v3h-1zM653 244h1v3h-1zM653 250h1v3h-1zM653 256h1v3h-1zM653 262h1v3h-1zM653 268h1v3h-1zM653 274h1v3h-1zM653 280h1v3h-1zM653 286h1v3h-1zM653 292h1v3h-1zM653 298h1v3h-1zM653 304h1v3h-1zM653 310h1v3h-1zM653 316h1v3h-1zM653 322h1v3h-1zM653 328h1v3h-1zM653 334h1v3h-1zM653 340h1v3h-1zM653 346h1v3h-1zM653 352h1v3h-1zM653 358h1v3h-1zM653 364h1v3h-1zM653 370h1v3h-1zM653 376h1v3h-1zM653 382h1v3h-1zM653 388h1v3h-1zM653 394h1v3h-1zM653 400h1v3h-1zM653 406h1v3h-1zM653 412h1v3h-1zM653 418h1v3h-1zM653 424h1v3h-1zM653 430h1v3h-1zM653 436h1v3h-1zM653 442h1v3h-1zM653 448h1v3h-1zM653 454h1v3h-1zM653 460h1v3h-1zM653 466h1v3h-1zM653 472h1v3h-1zM653 478h1v3h-1zM653 484h1v3h-1zM653 490h1v3h-1zM653 496h1v3h-1zM653 502h1v3h-1zM653 508h1v3h-1zM653 514h1v3h-1zM653 520h1v3h-1zM653 526h1v3h-1zM653 532h1v3h-1zM653 538h1v3h-1zM653 544h1v3h-1zM653 550h1v2h-1z" fill="#778899"/>
<path d="M14 39h3v1h-3zM20 39h3v1h-3zM26 39h3v1h-3zM32 39h3v1h-3zM38 39h3v1h-3zM44 39h3v1h-3zM50 39h3v1h-3zM56 39h3v1h-3zM62 39h3v1h-3zM68 39h3v1h-3zM74 39h3v1h-3zM80 39h3v1h-3zM86 39h3v1h-3zM92 39h3v1h-3zM98 39h3v1h-3zM104 39h3v1h-3zM110 39h3v1h-3zM116 39h3v1h-3zM122 39h3v1h-3zM128 39h3v1h-3zM134 39h3v1h-3zM140 39h3v1h-3zM146 39h3v1h-3zM152 39h3v1h-3zM158 39h3v1h-3zM164 39h3v1h-3zM170 39h3v1h-3zM176 39h3v1h-3zM182 39h3v1h-3zM188 39h3v1h-3zM194 39h3v1h-3zM200 39h3v1h-3zM206 39h3v1h-3zM212 39h3v1h-3zM218 39h3v1h-3zM224 39h3v1h-3zM230 39h3v1h-3zM236 39h3v1h-3zM242 39h3v1h-3zM248 39h3v1h-3zM254 39h3v1h-3zM260 39h3v1h-3zM266 39h3v1h-3zM272 39h3v1h-3zM278 39h3v1h-3zM284 39h3v1h-3zM290 39h3v1h-3zM296 39h3v1h-3zM302 39h3v1h-3zM308 39h3v1h-3zM314 39h3v1h-3zM320 39h3v1h-3zM326 39h3v1h-3zM332 39h3v1h-3zM338 39h3v1h-3zM344 39h3v1h-3zM350 39h3v1h-3zM356 39h3v1h-3zM362 39h3v1h-3zM368 39h3v1h-3zM374 39h3v1h-3zM380 39h3v1h-3zM386 39h3v1h-3zM392 39h3v1h-3zM398 39h3v1h-3zM404 39h3v1h-3zM410 39h3v1h-3zM416 39h3v1h-3zM422 39h3v1h-3zM428 39h3v1h-3zM434 39h3v1h-3zM440 39h3v1h-3zM446 39h3v1h-3zM452 39h3v1h-3zM458 39h3v1h-3zM464 39h3v1h-3zM470 39h3v1h-3zM476 39h3v1h-3zM482 39h3v1h-3zM488 39h3v1h-3zM494 39h3v1h-3zM500 39h3v1h-3zM506 39h3v1h-3zM512 39h3v1h-3zM518 39h3v1h-3zM524 39h3v1h-3zM530 39h3v1h-3zM536 39h3v1h-3zM542 39h3v1h-3zM548 39h3v1h-3zM554 39h3v1h-3zM560 39h3v1h-3zM566 39h3v1h-3zM572 39h3v1h-3zM578 39h3v1h-3zM584 39h3v1h-3zM590 39h3v1h-3zM596 39h3v1h-3zM602 39h3v1h-3zM608 39h3v1h-3zM614 39h3v1h-3zM620 39h3v1h-3zM626 39h3v1h-3zM632 39h3v1h-3zM638 39h3v1h-3zM644 39h3v1h-3zM650 39h3v1h-3zM656 39h3v1h-3zM662 39h3v1h-3zM668 39h3v1h-3zM674 39h3v1h-3z" fill="#778899"/>
<path d="M14 72h3v1h-3zM20 72h3v1h-3zM26 72h3v1h-3zM32 72h3v1h-3zM38 72h3v1h-3zM44 72h3v1h-3zM50 72h3v1h-3zM56 72h3v1h-3zM62 72h3v1h-3zM68 72h3v1h-3zM74 72h3v1h-3zM80 72h3v1h-3zM86 72h3v1h-3zM92 72h3v1h-3zM98 72h3v1h-3zM104 72h3v1h-3zM110 72h3v1h-3zM116 72h3v1h-3zM122 72h3v1h-3zM128 72h3v1h-3zM134 72h3v1h-3zM140 72h3v1h-3zM146 72h3v1h-3zM152 72h3v1h-3zM158 72h3v1h-3zM164 72h3v1h-3zM170 72h3v1h-3zM176 72h3v1h-3zM182 72h3v1h-3zM188 72h3v1h-3zM194 72h3v1h-3zM200 72h3v1h-3zM206 72h3v1h-3zM212 72h3v1h-3zM218 72h3v1h-3zM224 72h3v1h-3zM230 72h3v1h-3zM236 72h3v1h-3zM242 72h3v1h-3zM248 72h3v1h-3zM254 72h3v1h-3zM260 72h3v1h-3zM266 72h3v1h-3zM272 72h3v1h-3zM278 72h3v1h-3zM284 72h3v1h-3zM290 72h3v1h-3zM296 72h3v1h-3zM302 72h3v1h-3zM308 72h3v1h-3zM314 72h3v1h-3zM320 72h3v1h-3zM326 72h3v1h-3zM332 72h3v1h-3zM338 72h3v1h-3zM344 72h3v1h-3zM350 72h3v1h-3zM356 72h3v1h-3zM362 72h3v1h-3zM368 72h3v1h-3zM374 72h3v1h-3zM380 72h3v1h-3zM386 72h3v1h-3zM392 72h3v1h-3zM398 72h3v1h-3zM404 72h3v1h-3zM410 72h3v1h-3zM416 72h3v1h-3zM422 72h3v1h-3zM428 72h3v1h-3zM434 72h3v1h-3zM440 72h3v1h-3zM446 72h3v1h-3zM452 72h3v1h-3zM458 72h3v1h-3zM464 72h3v1h-3zM470 72h3v1h-3zM476 72h3v1h-3zM482 72h3v1h-3zM488 72h3v1h-3zM494 72h3v1h-3zM500 72h3v1h-3zM506 72h3v1h-3zM512 72h3v1h-3zM518 72h3v1h-3zM524 72h3v1h-3zM530 72h3v1h-3zM536 72h3v1h-3zM542 72h3v1h-3zM548 72h3v1h-3zM554 72h3v1h-3zM560 72h3v1h-3zM566 72h3v1h-3zM572 72h3v1h-3zM578 72h3v1h-3zM584 72h3v1h-3zM590 72h3v1h-3zM596 72h3v1h-3zM602 72h3v1h-3zM608 72h3v1h-3zM614 72h3v1h-3zM620 72h3v1h-3zM626 72h3v1h-3zM632 72h3v1h-3zM638 72h3v1h-3zM644 72h3v1h-3zM650 72h3v1h-3zM656 72h3v1h-3zM662 72h3v1h-3zM668 72h3v1h-3zM674 72h3v1h-3z" fill="#778899"/>
<path d="M14 106h3v1h-3zM20 106h3v1h-3zM26 106h3v1h-3zM32 106h3v1h-3zM38 106h3v1h-3zM44 106h3v1h-3zM50 106h3v1h-3zM56 106h3v1h-3zM62 106h3v1h-3zM68 106h3v1h-3zM74 106h3v1h-3zM80 106h3v1h-3zM86 106h3v1h-3zM92 106h3v1h-3zM98 106h3v1h-3zM104 106h3v1h-3zM110 106h3v1h-3zM116 106h3v1h-3zM122 106h3v1h-3zM128 106h3v1h-3zM134 106h3v1h-3zM140 106h3v1h-3zM146 106h3v1h-3zM152 106h3v1h-3zM158 106h3v1h-3zM164 106h3v1h-3zM170 106h3v1h-3zM176 106h3v1h-3zM182 106h3v1h-3zM188 106h3v1h-3zM194 106h3v1h-3zM200 106h3v1h-3zM206 106h3v1h-3zM212 106h3v1h-3zM218 106h3v1h-3zM224 106h3v1h-3zM230 106h3v1h-3zM236 106h3v1h-3zM242 106h3v1h-3zM248 106h3v1h-3zM254 106h3v1h-3zM260 106h3v1h-3zM266 106h3v1h-3zM272 106h3v1h-3zM278 106h3v1h-3zM284 106h3v1h-3zM290 106h3v1h-3zM296 106h3v1h-3zM302 106h3v1h-3zM308 106h3v1h-3zM314 106h3v1h-3zM320 106h3v1h-3zM326 106h3v1h-3zM332 106h3v1h-3zM338 106h3v1h-3zM344 106h3v1h-3zM350 106h3v1h-3zM356 106h3v1h-3zM362 106h3v1h-3zM368 106h3v1h-3zM374 106h3v1h-3zM380 106h3v1h-3zM386 106h3v1h-3zM392 106h3v1h-3zM398 106h3v1h-3zM404 106h3v1h-3zM410 106h3v1h-3zM416 106h3v1h-3zM422 106h3v1h-3zM428 106h3v1h-3zM434 106h3v1h-3zM440 106h3v1h-3zM446 106h3v1h-3zM452 106h3v1h-3zM458 106h3v1h-3zM464 106h3v1h-3zM470 106h3v1h-3zM476 106h3v1h-3zM482 106h3v1h-3zM488 106h3v1h-3zM494 106h3v1h-3zM500 106h3v1h-3zM506 106h3v1h-3zM512 106h3v1h-3zM518 106h3v1h-3zM524 106h3v1h-3zM530 106h3v1h-3zM536 106h3v1h-3zM542 106h3v1h-3zM548 106h3v1h-3zM554 106h3v1h-3zM560 106h3v1h-3zM566 106h3v1h-3zM572 106h3v1h-3zM578 106h3v1h-3zM584 106h3v1h-3zM590 106h3v1h-3zM596 106h3v1h-3zM602 106h3v1h-3zM608 106h3v1h-3zM614 106h3v1h-3zM620 106h3v1h-3zM626 106h3v1h-3zM632 106h3v1h-3zM638 106h3v1h-3zM644 106h3v1h-3zM650 106h3v1h-3zM656 106h3v1h-3zM662 106h3v1h-3zM668 106h3v1h-3zM674 106h3v1h-3z" fill="#778899"/>
<path d="M14 139h3v1h-3zM20 139h3v1h-3zM26 139h3v1h-3zM32 139h3v1h-3zM38 139h3v1h-3zM44 139h3v1h-3zM50 139h3v1h-3zM56 139h3v1h-3zM62 139h3v1h-3zM68 139h3v1h-3zM74 139h3v1h-3zM80 139h3v1h-3zM86 139h3v1h-3zM92 139h3v1h-3zM98 139h3v1h-3zM104 139h3v1h-3zM110 139h3v1h-3zM116 139h3v1h-3zM122 139h3v1h-3zM128 139h3v1h-3zM134 139h3v1h-3zM140 139h3v1h-3zM146 139h3v1h-3zM152 139h3v1h-3zM158 139h3v1h-3zM164 139h3v1h-3zM170 139h3v1h-3zM176 139h3v1h-3zM182 139h3v1h-3zM188 139h3v1h-3zM194 139h3v1h-3zM200 139h3v1h-3zM206 139h3v1h-3zM212 139h3v1h-3zM218 139h3v1h-3zM224 139h3v1h-3zM230 139h3v1h-3zM236 139h3v1h-3zM242 139h3v1h-3zM248 139h3v1h-3zM254 139h3v1h-3zM260 139h3v1h-3zM266 139h3v1h-3zM272 139h3v1h-3zM278 139h3v1h-3zM284 139h3v1h-3zM290 139h3v1h-3zM296 139h3v1h-3zM302 139h3v1h-3zM308 139h3v1h-3zM314 139h3v1h-3zM320 139h3v1h-3zM326 139h3v1h-3zM332 139h3v1h-3zM338 139h3v1h-3zM344 139h3v1h-3zM350 139h3v1h-3zM356 139h3v1h-3zM362 139h3v1h-3zM368 139h3v1h-3zM374 139h3v1h-3zM380 139h3v1h-3zM386 139h3v1h-3zM392 139h3v1h-3zM398 139h3v1h-3zM404 139h3v1h-3zM410 139h3v1h-3zM416 139h3v1h-3zM422 139h3v1h-3zM428 139h3v1h-3zM434 139h3v1h-3zM440 139h3v1h-3zM446 139h3v1h-3zM452 139h3v1h-3zM458 139h3v1h-3zM464 139h3v1h-3zM470 139h3v1h-3zM476 139h3v1h-3zM482 139h3v1h-3zM488 139h3v1h-3zM494 139h3v1h-3zM500 139h3v1h-3zM506 139h3v1h-3zM512 139h3v1h-3zM518 139h3v1h-3zM524 139h3v1h-3zM530 139h3v1h-3zM536 139h3v1h-3zM542 139h3v1h-3zM548 139h3v1h-3zM554 139h3v1h-3zM560 139h3v1h-3zM566 139h3v1h-3zM572 139h3v1h-3zM578 139h3v1h-3zM584 139h3v1h-3zM590 139h3v1h-3zM596 139h3v1h-3zM602 139h3v1h-3zM608 139h3v1h-3zM614 139h3v1h-3zM620 139h3v1h-3zM626 139h3v1h-3zM632 139h3v1h-3zM638 139h3v1h-3zM644 139h3v1h-3zM650 139h3v1h-3zM656 139h3v1h-3zM662 139h3v1h-3zM668 139h3v1h-3zM674 139h3v1h-3z" fill="#778899"/>
<path d="M14 173h3v1h-3zM20 173h3v1h-3zM26 173h3v1h-3zM32 173h3v1h-3zM38 173h3v1h-3zM44 173h3v1h-3zM50 173h3v1h-3zM56 173h3v1h-3zM62 173h3v1h-3zM68 173h3v1h-3zM74 173h3v1h-3zM80 173h3v1h-3zM86 173h3v1h-3zM92 173h3v1h-3zM98 173h3v1h-3zM104 173h3v1h-3zM110 173h3v1h-3zM116 173h3v1h-3zM122 173h3v1h-3zM128 173h3v1h-3zM134 173h3v1h-3zM140 173h3v1h-3zM146 173h3v1h-3zM152 173h3v1h-3zM158 173h3v1h-3zM164 173h3v1h-3zM170 173h3v1h-3zM176 173h3v1h-3zM182 173h3v1h-3zM188 173h3v1h-3zM194 173h3v1h-3zM200 173h3v1h-3zM206 173h3v1h-3zM212 173h3v1h-3zM218 173h3v1h-3zM224 173h3v1h-3zM230 173h3v1h-3zM236 173h3v1h-3zM242 173h3v1h-3zM248 173h3v1h-3zM254 173h3v1h-3zM260 173h3v1h-3zM266 173h3v1h-3zM272 173h3v1h-3zM278 173h3v1h-3zM284 173h3v1h-3zM290 173h3v1h-3zM296 173h3v1h-3zM302 173h3v1h-3zM308 173h3v1h-3zM314 173h3v1h-3zM320 173h3v1h-3zM326 173h3v1h-3zM332 173h3v1h-3zM338 173h3v1h-3zM344 173h3v1h-3zM350 173h3v1h-3zM356 173h3v1h-3zM362 173h3v1h-3zM368 173h3v1h-3zM374 173h3v1h-3zM380 173h3v1h-3zM386 173h3v1h-3zM392 173h3v1h-3zM398 173h3v1h-3zM404 173h3v1h-3zM410 173h3v1h-3zM416 173h3v1h-3zM422 173h3v1h-3zM428 173h3v1h-3zM434 173h3v1h-3zM440 173h3v1h-3zM446 173h3v1h-3zM452 173h3v1h-3zM458 173h3v1h-3zM464 173h3v1h-3zM470 173h3v1h-3zM476 173h3v1h-3zM482 173h3v1h-3zM488 173h3v1h-3zM494 173h3v1h-3zM500 173h3v1h-3zM506 173h3v1h-3zM512 173h3v1h-3zM518 173h3v1h-3zM524 173h3v1h-3zM530 173h3v1h-3zM536 173h3v1h-3zM542 173h3v1h-3zM548 173h3v1h-3zM554 173h3v1h-3zM560 173h3v1h-3zM566 173h3v1h-3zM572 173h3v1h-3zM578 173h3v1h-3zM584 173h3v1h-3zM590 173h3v1h-3zM596 173h3v1h-3zM602 173h3v1h-3zM608 173h3v1h-3zM614 173h3v1h-3zM620 173h3v1h-3zM626 173h3v1h-3zM632 173h3v1h-3zM638 173h3v1h-3zM644 173h3v1h-3zM650 173h3v1h-3zM656 173h3v1h-3zM662 173h3v1h-3zM668 173h3v1h-3zM674 173h3v1h-3z" fill="#778899"/>
<path d="M14 206h3v1h-3zM20 206h3v1h-3zM26 206h3v1h-3zM32 206h3v1h-3zM38 206h3v1h-3zM44 206h3v1h-3zM50 206h3v1h-3zM56 206h3v1h-3zM62 206h3v1h-3zM68 206h3v1h-3zM74 206h3v1h-3zM80 206h3v1h-3zM86 206h3v1h-3zM92 206h3v1h-3zM98 206h3v1h-3zM104 206h3v1h-3zM110 206h3v1h-3zM116 206h3v1h-3zM122 206h3v1h-3zM128 206h3v1h-3zM134 206h3v1h-3zM140 206h3v1h-3zM146 206h3v1h-3zM152 206h3v1h-3zM158 206h3v1h-3zM164 206h3v1h-3zM170 206h3v1h-3zM176 206h3v1h-3zM182 206h3v1h-3zM188 206h3v1h-3zM194 206h3v1h-3zM200 206h3v1h-3zM206 206h3v1h-3zM212 206h3v1h-3zM218 206h3v1h-3zM224 206h3v1h-3zM230 206h3v1h-3zM236 206h3v1h-3zM242 206h3v1h-3zM248 206h3v1h-3zM254 206h3v1h-3zM260 206h3v1h-3zM266 206h3v1h-3zM272 206h3v1h-3zM278 206h3v1h-3zM284 206h3v1h-3zM290 206h3v1h-3zM296 206h3v1h-3zM302 206h3v1h-3zM308 206h3v1h-3zM314 206h3v1h-3zM320 206h3v1h-3zM326 206h3v1h-3zM332 206h3v1h-3zM338 206h3v1h-3zM344 206h3v1h-3zM350 206h3v1h-3zM356 206h3v1h-3zM362 206h3v1h-3zM368 206h3v1h-3zM374 206h3v1h-3zM380 206h3v1h-3zM386 206h3v1h-3zM392 206h3v1h-3zM398 206h3v1h-3zM404 206h3v1h-3zM410 206h3v1h-3zM416 206h3v1h-3zM422 206h3v1h-3zM428 206h3v1h-3zM434 206h3v1h-3zM440 206h3v1h-3zM446 206h3v1h-3zM452 206h3v1h-3zM458 206h3v1h-3zM464 206h3v1h-3zM470 206h3v1h-3zM476 206h3v1h-3zM482 206h3v1h-3zM488 206h3v1h-3zM494 206h3v1h-3zM500 206h3v1h-3zM506 206h3v1h-3zM512 206h3v1h-3zM518 206h3v1h-3zM524 206h3v1h-3zM530 206h3v1h-3zM536 206h3v1h-3zM542 206h3v1h-3zM548 206h3v1h-3zM554 206h3v1h-3zM560 206h3v1h-3zM566 206h3v1h-3zM572 206h3v1h-3zM578 206h3v1h-3zM584 206h3v1h-3zM590 206h3v1h-3zM596 206h3v1h-3zM602 206h3v1h-3zM608 206h3v1h-3zM614 206h3v1h-3zM620 206h3v1h-3zM626 206h3v1h-3zM632 206h3v1h-3zM638 206h3v1h-3zM644 206h3v1h-3zM650 206h3v1h-3zM656 206h3v1h-3zM662 206h3v1h-3zM668 206h3v1h-3zM674 206h3v1h-3z" fill="#778899"/>
<path d="M14 239h3v1h-3zM20 239h3v1h-3zM26 239h3v1h-3zM32 239h3v1h-3zM38 239h3v1h-3zM44 239h3v1h-3zM50 239h3v1h-3zM56 239h3v1h-3zM62 239h3v1h-3zM68 239h3v1h-3zM74 239h3v1h-3zM80 239h3v1h-3zM86 239h3v1h-3zM92 239h3v1h-3zM98 239h3v1h-3zM104 239h3v1h-3zM110 239h3v1h-3zM116 239h3v1h-3zM122 239h3v1h-3zM128 239h3v1h-3zM134 239h3v1h-3zM140 239h3v1h-3zM146 239h3v1h-3zM152 239h3v1h-3zM158 239h3v1h-3zM164 239h3v1h-3zM170 239h3v1h-3zM176 239h3v1h-3zM182 239h3v1h-3zM188 239h3v1h-3zM194 239h3v1h-3zM200 239h3v1h-3zM206 239h3v1h-3zM212 239h3v1h-3zM218 239h3v1h-3zM224 239h3v1h-3zM230 239h3v1h-3zM236 239h3v1h-3zM242 239h3v1h-3zM248 239h3v1h-3zM254 239h3v1h-3zM260 239h3v1h-3zM266 239h3v1h-3zM272 239h3v1h-3zM278 239h3v1h-3zM284 239h3v1h-3zM290 239h3v1h-3zM296 239h3v1h-3zM302 239h3v1h-3zM308 239h3v1h-3zM314 239h3v1h-3zM320 239h3v1h-3zM326 239h3v1h-3zM332 239h3v1h-3zM338 239h3v1h-3zM344 239h3v1h-3zM350 239h3v1h-3zM356 239h3v1h-3zM362 239h3v1h-3zM368 239h3v1h-3zM374 239h3v1h-3zM380 239h3v1h-3zM386 239h3v1h-3zM392 239h3v1h-3zM398 239h3v1h-3zM404 239h3v1h-3zM410 239h3v1h-3zM416 239h3v1h-3zM422 239h3v1h-3zM428 239h3v1h-3zM434 239h3v1h-3zM440 239h3v1h-3zM446 239h3v1h-3zM452 239h3v1h-3zM458 239h3v1h-3zM464 239h3v1h-3zM470 239h3v1h-3zM476 239h3v1h-3zM482 239h3v1h-3zM488 239h3v1h-3zM494 239h3v1h-3zM500 239h3v1h-3zM506 239h3v1h-3zM512 239h3v1h-3zM518 239h3v1h-3zM524 239h3v1h-3zM530 239h3v1h-3zM536 239h3v1h-3zM542 239h3v1h-3zM548 239h3v1h-3zM554 239h3v1h-3zM560 239h3v1h-3zM566 239h3v1h-3zM572 239h3v1h-3zM578 239h3v1h-3zM584 239h3v1h-3zM590 239h3v1h-3zM596 239h3v1h-3zM602 239h3v1h-3zM608 239h3v1h-3zM614 239h3v1h-3zM620 239h3v1h-3zM626 239h3v1h-3zM632 239h3v1h-3zM638 239h3v1h-3zM644 239h3v1h-3zM650 239h3v1h-3zM656 239h3v1h-3zM662 239h3v1h-3zM668 239h3v1h-3zM674 239h3v1h-3z" fill="#778899"/>
<path d="M14 273h3v1h-3zM20 273h3v1h-3zM26 273h3v1h-3zM32 273h3v1h-3zM38 273h3v1h-3zM44 273h3v1h-3zM50 273h3v1h-3zM56 273h3v1h-3zM62 273h3v1h-3zM68 273h3v1h-3zM74 273h3v1h-3zM80 273h3v1h-3zM86 273h3v1h-3zM92 273h3v1h-3zM98 273h3v1h-3zM104 273h3v1h-3zM110 273h3v1h-3zM116 273h3v1h-3zM122 273h3v1h-3zM128 273h3v1h-3zM134 273h3v1h-3zM140 273h3v1h-3zM146 273h3v1h-3zM152 273h3v1h-3zM158 273h3v1h-3zM164 273h3v1h-3zM170 273h3v1h-3zM176 273h3v1h-3zM182 273h3v1h-3zM188 273h3v1h-3zM194 273h3v1h-3zM200 273h3v1h-3zM206 273h3v1h-3zM212 273h3v1h-3zM218 273h3v1h-3zM224 273h3v1h-3zM230 273h3v1h-3zM236 273h3v1h-3zM242 273h3v1h-3zM248 273h3v1h-3zM254 273h3v1h-3zM260 273h3v1h-3zM266 273h3v1h-3zM272 273h3v1h-3zM278 273h3v1h-3zM284 273h3v1h-3zM290 273h3v1h-3zM296 273h3v1h-3zM302 273h3v1h-3zM308 273h3v1h-3zM314 273h3v1h-3zM320 273h3v1h-3zM326 273h3v1h-3zM332 273h3v1h-3zM338 273h3v1h-3zM344 273h3v1h-3zM350 273h3v1h-3zM356 273h3v1h-3zM362 273h3v1h-3zM368 273h3v1h-3zM374 273h3v1h-3zM380 273h3v1h-3zM386 273h3v1h-3zM392 273h3v1h-3zM398 273h3v1h-3zM404 273h3v1h-3zM410 273h3v1h-3zM416 273h3v1h-3zM422 273h3v1h-3zM428 273h3v1h-3zM434 273h3v1h-3zM440 273h3v1h-3zM446 273h3v1h-3zM452 273h3v1h-3zM458 273h3v1h-3zM464 273h3v1h-3zM470 273h3v1h-3zM476 273h3v1h-3zM482 273h3v1h-3zM488 273h3v1h-3zM494 273h3v1h-3zM500 273h3v1h-3zM506 273h3v1h-3zM512 273h3v1h-3zM518 273h3v1h-3zM524 273h3v1h-3zM530 273h3v1h-3zM536 273h3v1h-3zM542 273h3v1h-3zM548 273h3v1h-3zM554 273h3v1h-3zM560 273h3v1h-3zM566 273h3v1h-3zM572 273h3v1h-3zM578 273h3v1h-3zM584 273h3v1h-3zM590 273h3v1h-3zM596 273h3v1h-3zM602 273h3v1h-3zM608 273h3v1h-3zM614 273h3v1h-3zM620 273h3v1h-3zM626 273h3v1h-3zM632 273h3v1h-3zM638 273h3v1h-3zM644 273h3v1h-3zM650 273h3v1h-3zM656 273h3v1h-3zM662 273h3v1h-3zM668 273h3v1h-3zM674 273h3v1h-3z" fill="#778899"/>
<path d="M14 306h3v1h-3zM20 306h3v1h-3zM26 306h3v1h-3zM32 306h3v1h-3zM38 306h3v1h-3zM44 306h3v1h-3zM50 306h3v1h-3zM56 306h3v1h-3zM62 306h3v1h-3zM68 306h3v1h-3zM74 306h3v1h-3zM80 306h3v1h-3zM86 306h3v1h-3zM92 306h3v1h-3zM98 306h3v1h-3zM104 306h3v1h-3zM110 306h3v1h-3zM116 306h3v1h-3zM122 306h3v1h-3zM128 306h3v1h-3zM134 306h3v1h-3zM140 306h3v1h-3zM146 306h3v1h-3zM152 306h3v1h-3zM158 306h3v1h-3zM164 306h3v1h-3zM170 306h3v1h-3zM176 306h3v1h-3zM182 306h3v1h-3zM188 306h3v1h-3zM194 306h3v1h-3zM200 306h3v1h-3zM206 306h3v1h-3zM212 306h3v1h-3zM218 306h3v1h-3zM224 306h3v1h-3zM230 306h3v1h-3zM236 306h3v1h-3zM242 306h3v1h-3zM248 306h3v1h-3zM254 306h3v1h-3zM260 306h3v1h-3zM266 306h3v1h-3zM272 306h3v1h-3zM278 306h3v1h-3zM284 306h3v1h-3zM290 306h3v1h-3zM296 306h3v1h-3zM302 306h3v1h-3zM308 306h3v1h-3zM314 306h3v1h-3zM320 306h3v1h-3zM326 306h3v1h-3zM332 306h3v1h-3zM338 306h3v1h-3zM344 306h3v1h-3zM350 306h3v1h-3zM356 306h3v1h-3zM362 306h3v1h-3zM368 306h3v1h-3zM374 306h3v1h-3zM380 306h3v1h-3zM386 306h3v1h-3zM392 306h3v1h-3zM398 306h3v1h-3zM404 306h3v1h-3zM410 306h3v1h-3zM416 306h3v1h-3zM422 306h3v1h-3zM428 306h3v1h-3zM434 306h3v1h-3zM440 306h3v1h-3zM446 306h3v1h-3zM452 306h3v1h-3zM458 306h3v1h-3zM464 306h3v1h-3zM470 306h3v1h-3zM476 306h3v1h-3zM482 306h3v1h-3zM488 306h3v1h-3zM494 306h3v1h-3zM500 306h3v1h-3zM506 306h3v1h-3zM512 306h3v1h-3zM518 306h3v1h-3zM524 306h3v1h-3zM530 306h3v1h-3zM536 306h3v1h-3zM542 306h3v1h-3zM548 306h3v1h-3zM554 306h3v1h-3zM560 306h3v1h-3zM566 306h3v1h-3zM572 306h3v1h-3zM578 306h3v1h-3zM584 306h3v1h-3zM590 306h3v1h-3zM596 306h3v1h-3zM602 306h3v1h-3zM608 306h3v1h-3zM614 306h3v1h-3zM620 306h3v1h-3zM626 306h3v1h-3zM632 306h3v1h-3zM638 306h3v1h-3zM644 306h3v1h-3zM650 306h3v1h-3zM656 306h3v1h-3zM662 306h3v1h-3zM668 306h3v1h-3zM674 306h3v1h-3z" fill="#778899"/>
<path d="M14 340h3v1h-3zM20 340h3v1h-3zM26 340h3v1h-3zM32 340h3v1h-3zM38 340h3v1h-3zM44 340h3v1h-3zM50 340h3v1h-3zM56 340h3v1h-3zM62 340h3v1h-3zM68 340h3v1h-3zM74 340h3v1h-3zM80 340h3v1h-3zM86 340h3v1h-3zM92 340h3v1h-3zM98 340h3v1h-3zM104 340h3v1h-3zM110 340h3v1h-3zM116 340h3v1h-3zM122 340h3v1h-3zM128 340h3v1h-3zM134 340h3v1h-3zM140 340h3v1h-3zM146 340h3v1h-3zM152 340h3v1h-3zM158 340h3v1h-3zM164 340h3v1h-3zM170 340h3v1h-3zM176 340h3v1h-3zM182 340h3v1h-3zM188 340h3v1h-3zM194 340h3v1h-3zM200 340h3v1h-3zM206 340h3v1h-3zM212 340h3v1h-3zM218 340h3v1h-3zM224 340h3v1h-3zM230 340h3v1h-3zM236 340h3v1h-3zM242 340h3v1h-3zM248 340h3v1h-3zM254 340h3v1h-3zM260 340h3v1h-3zM266 340h3v1h-3zM272 340h3v1h-3zM278 340h3v1h-3zM284 340h3v1h-3zM290 340h3v1h-3zM296 340h3v1h-3zM302 340h3v1h-3zM308 340h3v1h-3zM314 340h3v1h-3zM320 340h3v1h-3zM326 340h3v1h-3zM332 340h3v1h-3zM338 340h3v1h-3zM344 340h3v1h-3zM350 340h3v1h-3zM356 340h3v1h-3zM362 340h3v1h-3zM368 340h3v1h-3zM374 340h3v1h-3zM380 340h3v1h-3zM386 340h3v1h-3zM392 340h3v1h-3zM398 340h3v1h-3zM404 340h3v1h-3zM410 340h3v1h-3zM416 340h3v1h-3zM422 340h3v1h-3zM428 340h3v1h-3zM434 340h3v1h-3zM440 340h3v1h-3zM446 340h3v1h-3zM452 340h3v1h-3zM458 340h3v1h-3zM464 340h3v1h-3zM470 340h3v1h-3zM476 340h3v1h-3zM482 340h3v1h-3zM488 340h3v1h-3zM494 340h3v1h-3zM500 340h3v1h-3zM506 340h3v1h-3zM512 340h3v1h-3zM518 340h3v1h-3zM524 340h3v1h-3zM530 340h3v1h-3zM536 340h3v1h-3zM542 340h3v1h-3zM548 340h3v1h-3zM554 340h3v1h-3zM560 340h3v1h-3zM566 340h3v1h-3zM572 340h3v1h-3zM578 340h3v1h-3zM584 340h3v1h-3zM590 340h3v1h-3zM596 340h3v1h-3zM602 340h3v1h-3zM608 340h3v1h-3zM614 340h3v1h-3zM620 340h3v1h-3zM626 340h3v1h-3zM632 340h3v1h-3zM638 340h3v1h-3zM644 340h3v1h-3zM650 340h3v1h-3zM656 340h3v1h-3zM662 340h3v1h-3zM668 340h3v1h-3zM674 340h3v1h-3z" fill="#778899"/>
<path d="M14 373h3v1h-3zM20 373h3v1h-3zM26 373h3v1h-3zM32 373h3v1h-3zM38 373h3v1h-3zM44 373h3v1h-3zM50 373h3v1h-3zM56 373h3v1h-3zM62 373h3v1h-3zM68 373h3v1h-3zM74 373h3v1h-3zM80 373h3v1h-3zM86 373h3v1h-3zM92 373h3v1h-3zM98 373h3v1h-3zM104 373h3v1h-3zM110 373h3v1h-3zM116 373h3v1h-3zM122 373h3v1h-3zM128 373h3v1h-3zM134 373h3v1h-3zM140 373h3v1h-3zM146 373h3v1h-3zM152 373h3v1h-3zM158 373h3v1h-3zM164 373h3v1h-3zM170 373h3v1h-3zM176 373h3v1h-3zM182 373h3v1h-3zM188 373h3v1h-3zM194 373h3v1h-3zM200 373h3v1h-3zM206 373h3v1h-3zM212 373h3v1h-3zM218 373h3v1h-3zM224 373h3v1h-3zM230 373h3v1h-3zM236 373h3v1h-3zM242 373h3v1h-3zM248 373h3v1h-3zM254 373h3v1h-3zM260 373h3v1h-3zM266 373h3v1h-3zM272 373h3v1h-3zM278 373h3v1h-3zM284 373h3v1h-3zM290 373h3v1h-3zM296 373h3v1h-3zM302 373h3v1h-3zM308 373h3v1h-3zM314 373h3v1h-3zM320 373h3v1h-3zM326 373h3v1h-3zM332 373h3v1h-3zM338 373h3v1h-3zM344 373h3v1h-3zM350 373h3v1h-3zM356 373h3v1h-3zM362 373h3v1h-3zM368 373h3v1h-3zM374 373h3v1h-3zM380 373h3v1h-3zM386 373h3v1h-3zM392 373h3v1h-3zM398 373h3v1h-3zM404 373h3v1h-3zM410 373h3v1h-3zM416 373h3v1h-3zM422 373h3v1h-3zM428 373h3v1h-3zM434 373h3v1h-3zM440 373h3v1h-3zM446 373h3v1h-3zM452 373h3v1h-3zM458 373h3v1h-3zM464 373h3v1h-3zM470 373h3v1h-3zM476 373h3v1h-3zM482 373h3v1h-3zM488 373h3v1h-3zM494 373h3v1h-3zM500 373h3v1h-3zM506 373h3v1h-3zM512 373h3v1h-3zM518 373h3v1h-3zM524 373h3v1h-3zM530 373h3v1h-3zM536 373h3v1h-3zM542 373h3v1h-3zM548 373h3v1h-3zM554 373h3v1h-3zM560 373h3v1h-3zM566 373h3v1h-3zM572 373h3v1h-3zM578 373h3v1h-3zM584 373h3v1h-3zM590 373h3v1h-3zM596 373h3v1h-3zM602 373h3v1h-3zM608 373h3v1h-3zM614 373h3v1h-3zM620 373h3v1h-3zM626 373h3v1h-3zM632 373h3v1h-3zM638 373h3v1h-3zM644 373h3v1h-3zM650 373h3v1h-3zM656 373h3v1h-3zM662 373h3v1h-3zM668 373h3v1h-3zM674 373h3v1h-3z" fill="#778899"/>
<path d="M14 396h3v1h-3zM20 396h3v1h-3zM26 396h3v1h-3zM32 396h3v1h-3zM38 396h3v1h-3zM44 396h3v1h-3zM50 396h3v1h-3zM56 396h3v1h-3zM62 396h3v1h-3zM68 396h3v1h-3zM74 396h3v1h-3zM80 396h3v1h-3zM86 396h3v1h-3zM92 396h3v1h-3zM98 396h3v1h-3zM104 396h3v1h-3zM110 396h3v1h-3zM116 396h3v1h-3zM122 396h3v1h-3zM128 396h3v1h-3zM134 396h3v1h-3zM140 396h3v1h-3zM146 396h3v1h-3zM152 396h3v1h-3zM158 396h3v1h-3zM164 396h3v1h-3zM170 396h3v1h-3zM176 396h3v1h-3zM182 396h3v1h-3zM188 396h3v1h-3zM194 396h3v1h-3zM200 396h3v1h-3zM206 396h3v1h-3zM212 396h3v1h-3zM218 396h3v1h-3zM224 396h3v1h-3zM230 396h3v1h-3zM236 396h3v1h-3zM242 396h3v1h-3zM248 396h3v1h-3zM254 396h3v1h-3zM260 396h3v1h-3zM266 396h3v1h-3zM272 396h3v1h-3zM278 396h3v1h-3zM284 396h3v1h-3zM290 396h3v1h-3zM296 396h3v1h-3zM302 396h3v1h-3zM308 396h3v1h-3zM314 396h3v1h-3zM320 396h3v1h-3zM326 396h3v1h-3zM332 396h3v1h-3zM338 396h3v1h-3zM344 396h3v1h-3zM350 396h3v1h-3zM356 396h3v1h-3zM362 396h3v1h-3zM368 396h3v1h-3zM374 396h3v1h-3zM380 396h3v1h-3zM386 396h3v1h-3zM392 396h3v1h-3zM398 396h3v1h-3zM404 396h3v1h-3zM410 396h3v1h-3zM416 396h3v1h-3zM422 396h3v1h-3zM428 396h3v1h-3zM434 396h3v1h-3zM440 396h3v1h-3zM446 396h3v1h-3zM452 396h3v1h-3zM458 396h3v1h-3zM464 396h3v1h-3zM470 396h3v1h-3zM476 396h3v1h-3zM482 396h3v1h-3zM488 396h3v1h-3zM494 396h3v1h-3zM500 396h3v1h-3zM506 396h3v1h-3zM512 396h3v1h-3zM518 396h3v1h-3zM524 396h3v1h-3zM530 396h3v1h-3zM536 396h3v1h-3zM542 396h3v1h-3zM548 396h3v1h-3zM554 396h3v1h-3zM560 396h3v1h-3zM566 396h3v1h-3zM572 396h3v1h-3zM578 396h3v1h-3zM584 396h3v1h-3zM590 396h3v1h-3zM596 396h3v1h-3zM602 396h3v1h-3zM608 396h3v1h-3zM614 396h3v1h-3zM620 396h3v1h-3zM626 396h3v1h-3zM632 396h3v1h-3zM638 396h3v1h-3zM644 396h3v1h-3zM650 396h3v1h-3zM656 396h3v1h-3zM662 396h3v1h-3zM668 396h3v1h-3zM674 396h3v1h-3z" fill="#c0c0c0"/>
<path d="M14 412h3v1h-3zM20 412h3v1h-3zM26 412h3v1h-3zM32 412h3v1h-3zM38 412h3v1h-3zM44 412h3v1h-3zM50 412h3v1h-3zM56 412h3v1h-3zM62 412h3v1h-3zM68 412h3v1h-3zM74 412h3v1h-3zM80 412h3v1h-3zM86 412h3v1h-3zM92 412h3v1h-3zM98 412h3v1h-3zM104 412h3v1h-3zM110 412h3v1h-3zM116 412h3v1h-3zM122 412h3v1h-3zM128 412h3v1h-3zM134 412h3v1h-3zM140 412h3v1h-3zM146 412h3v1h-3zM152 412h3v1h-3zM158 412h3v1h-3zM164 412h3v1h-3zM170 412h3v1h-3zM176 412h3v1h-3zM182 412h3v1h-3zM188 412h3v1h-3zM194 412h3v1h-3zM200 412h3v1h-3zM206 412h3v1h-3zM212 412h3v1h-3zM218 412h3v1h-3zM224 412h3v1h-3zM230 412h3v1h-3zM236 412h3v1h-3zM242 412h3v1h-3zM248 412h3v1h-3zM254 412h3v1h-3zM260 412h3v1h-3zM266 412h3v1h-3zM272 412h3v1h-3zM278 412h3v1h-3zM284 412h3v1h-3zM290 412h3v1h-3zM296 412h3v1h-3zM302 412h3v1h-3zM308 412h3v1h-3zM314 412h3v1h-3zM320 412h3v1h-3zM326 412h3v1h-3zM332 412h3v1h-3zM338 412h3v1h-3zM344 412h3v1h-3zM350 412h3v1h-3zM356 412h3v1h-3zM362 412h3v1h-3zM368 412h3v1h-3zM374 412h3v1h-3zM380 412h3v1h-3zM386 412h3v1h-3zM392 412h3v1h-3zM398 412h3v1h-3zM404 412h3v1h-3zM410 412h3v1h-3zM416 412h3v1h-3zM422 412h3v1h-3zM428 412h3v1h-3zM434 412h3v1h-3zM440 412h3v1h-3zM446 412h3v1h-3zM452 412h3v1h-3zM458 412h3v1h-3zM464 412h3v1h-3zM470 412h3v1h-3zM476 412h3v1h-3zM482 412h3v1h-3zM488 412h3v1h-3zM494 412h3v1h-3zM500 412h3v1h-3zM506 412h3v1h-3zM512 412h3v1h-3zM518 412h3v1h-3zM524 412h3v1h-3zM530 412h3v1h-3zM536 412h3v1h-3zM542 412h3v1h-3zM548 412h3v1h-3zM554 412h3v1h-3zM560 412h3v1h-3zM566 412h3v1h-3zM572 412h3v1h-3zM578 412h3v1h-3zM584 412h3v1h-3zM590 412h3v1h-3zM596 412h3v1h-3zM602 412h3v1h-3zM608 412h3v1h-3zM614 412h3v1h-3zM620 412h3v1h-3zM626 412h3v1h-3zM632 412h3v1h-3zM638 412h3v1h-3zM644 412h3v1h-3zM650 412h3v1h-3zM656 412h3v1h-3zM662 412h3v1h-3zM668 412h3v1h-3zM674 412h3v1h-3z" fill="#c0c0c0"/>
<path d="M14 435h3v1h-3zM20 435h3v1h-3zM26 435h3v1h-3zM32 435h3v1h-3zM38 435h3v1h-3zM44 435h3v1h-3zM50 435h3v1h-3zM56 435h3v1h-3zM62 435h3v1h-3zM68 435h3v1h-3zM74 435h3v1h-3zM80 435h3v1h-3zM86 435h3v1h-3zM92 435h3v1h-3zM98 435h3v1h-3zM104 435h3v1h-3zM110 435h3v1h-3zM116 435h3v1h-3zM122 435h3v1h-3zM128 435h3v1h-3zM134 435h3v1h-3zM140 435h3v1h-3zM146 435h3v1h-3zM152 435h3v1h-3zM158 435h3v1h-3zM164 435h3v1h-3zM170 435h3v1h-3zM176 435h3v1h-3zM182 435h3v1h-3zM188 435h3v1h-3zM194 435h3v1h-3zM200 435h3v1h-3zM206 435h3v1h-3zM212 435h3v1h-3zM218 435h3v1h-3zM224 435h3v1h-3zM230 435h3v1h-3zM236 435h3v1h-3zM242 435h3v1h-3zM248 435h3v1h-3zM254 435h3v1h-3zM260 435h3v1h-3zM266 435h3v1h-3zM272 435h3v1h-3zM278 435h3v1h-3zM284 435h3v1h-3zM290 435h3v1h-3zM296 435h3v1h-3zM302 435h3v1h-3zM308 435h3v1h-3zM314 435h3v1h-3zM320 435h3v1h-3zM326 435h3v1h-3zM332 435h3v1h-3zM338 435h3v1h-3zM344 435h3v1h-3zM350 435h3v1h-3zM356 435h3v1h-3zM362 435h3v1h-3zM368 435h3v1h-3zM374 435h3v1h-3zM380 435h3v1h-3zM386 435h3v1h-3zM392 435h3v1h-3zM398 435h3v1h-3zM404 435h3v1h-3zM410 435h3v1h-3zM416 435h3v1h-3zM422 435h3v1h-3zM428 435h3v1h-3zM434 435h3v1h-3zM440 435h3v1h-3zM446 435h3v1h-3zM452 435h3v1h-3zM458 435h3v1h-3zM464 435h3v1h-3zM470 435h3v1h-3zM476 435h3v1h-3zM482 435h3v1h-3zM488 435h3v1h-3zM494 435h3v1h-3zM500 435h3v1h-3zM506 435h3v1h-3zM512 435h3v1h-3zM518 435h3v1h-3zM524 435h3v1h-3zM530 435h3v1h-3zM536 435h3v1h-3zM542 435h3v1h-3zM548 435h3v1h-3zM554 435h3v1h-3zM560 435h3v1h-3zM566 435h3v1h-3zM572 435h3v1h-3zM578 435h3v1h-3zM584 435h3v1h-3zM590 435h3v1h-3zM596 435h3v1h-3zM602 435h3v1h-3zM608 435h3v1h-3zM614 435h3v1h-3zM620 435h3v1h-3zM626 435h3v1h-3zM632 435h3v1h-3zM638 435h3v1h-3zM644 435h3v1h-3zM650 435h3v1h-3zM656 435h3v1h-3zM662 435h3v1h-3zM668 435h3v1h-3zM674 435h3v1h-3z" fill="#c0c0c0"/>
<path d="M14 513h3v1h-3zM20 513h3v1h-3zM26 513h3v1h-3zM32 513h3v1h-3zM38 513h3v1h-3zM44 513h3v1h-3zM50 513h3v1h-3zM56 513h3v1h-3zM62 513h3v1h-3zM68 513h3v1h-3zM74 513h3v1h-3zM80 513h3v1h-3zM86 513h3v1h-3zM92 513h3v1h-3zM98 513h3v1h-3zM104 513h3v1h-3zM110 513h3v1h-3zM116 513h3v1h-3zM122 513h3v1h-3zM128 513h3v1h-3zM134 513h3v1h-3zM140 513h3v1h-3zM146 513h3v1h-3zM152 513h3v1h-3zM158 513h3v1h-3zM164 513h3v1h-3zM170 513h3v1h-3zM176 513h3v1h-3zM182 513h3v1h-3zM188 513h3v1h-3zM194 513h3v1h-3zM200 513h3v1h-3zM206 513h3v1h-3zM212 513h3v1h-3zM218 513h3v1h-3zM224 513h3v1h-3zM230 513h3v1h-3zM236 513h3v1h-3zM242 513h3v1h-3zM248 513h3v1h-3zM254 513h3v1h-3zM260 513h3v1h-3zM266 513h3v1h-3zM272 513h3v1h-3zM278 513h3v1h-3zM284 513h3v1h-3zM290 513h3v1h-3zM296 513h3v1h-3zM302 513h3v1h-3zM308 513h3v1h-3zM314 513h3v1h-3zM320 513h3v1h-3zM326 513h3v1h-3zM332 513h3v1h-3zM338 513h3v1h-3zM344 513h3v1h-3zM350 513h3v1h-3zM356 513h3v1h-3zM362 513h3v1h-3zM368 513h3v1h-3zM374 513h3v1h-3zM380 513h3v1h-3zM386 513h3v1h-3zM392 513h3v1h-3zM398 513h3v1h-3zM404 513h3v1h-3zM410 513h3v1h-3zM416 513h3v1h-3zM422 513h3v1h-3zM428 513h3v1h-3zM434 513h3v1h-3zM440 513h3v1h-3zM446 513h3v1h-3zM452 513h3v1h-3zM458 513h3v1h-3zM464 513h3v1h-3zM470 513h3v1h-3zM476 513h3v1h-3zM482 513h3v1h-3zM488 513h3v1h-3zM494 513h3v1h-3zM500 513h3v1h-3zM506 513h3v1h-3zM512 513h3v1h-3zM518 513h3v1h-3zM524 513h3v1h-3zM530 513h3v1h-3zM536 513h3v1h-3zM542 513h3v1h-3zM548 513h3v1h-3zM554 513h3v1h-3zM560 513h3v1h-3zM566 513h3v1h-3zM572 513h3v1h-3zM578 513h3v1h-3zM584 513h3v1h-3zM590 513h3v1h-3zM596 513h3v1h-3zM602 513h3v1h-3zM608 513h3v1h-3zM614 513h3v1h-3zM620 513h3v1h-3zM626 513h3v1h-3zM632 513h3v1h-3zM638 513h3v1h-3zM644 513h3v1h-3zM650 513h3v1h-3zM656 513h3v1h-3zM662 513h3v1h-3zM668 513h3v1h-3zM674 513h3v1h-3z" fill="#c0c0c0"/>
<path d="M14 536h3v1h-3zM20 536h3v1h-3zM26 536h3v1h-3zM32 536h3v1h-3zM38 536h3v1h-3zM44 536h3v1h-3zM50 536h3v1h-3zM56 536h3v1h-3zM62 536h3v1h-3zM68 536h3v1h-3zM74 536h3v1h-3zM80 536h3v1h-3zM86 536h3v1h-3zM92 536h3v1h-3zM98 536h3v1h-3zM104 536h3v1h-3zM110 536h3v1h-3zM116 536h3v1h-3zM122 536h3v1h-3zM128 536h3v1h-3zM134 536h3v1h-3zM140 536h3v1h-3zM146 536h3v1h-3zM152 536h3v1h-3zM158 536h3v1h-3zM164 536h3v1h-3zM170 536h3v1h-3zM176 536h3v1h-3zM182 536h3v1h-3zM188 536h3v1h-3zM194 536h3v1h-3zM200 536h3v1h-3zM206 536h3v1h-3zM212 536h3v1h-3zM218 536h3v1h-3zM224 536h3v1h-3zM230 536h3v1h-3zM236 536h3v1h-3zM242 536h3v1h-3zM248 536h3v1h-3zM254 536h3v1h-3zM260 536h3v1h-3zM266 536h3v1h-3zM272 536h3v1h-3zM278 536h3v1h-3zM284 536h3v1h-3zM290 536h3v1h-3zM296 536h3v1h-3zM302 536h3v1h-3zM308 536h3v1h-3zM314 536h3v1h-3zM320 536h3v1h-3zM326 536h3v1h-3zM332 536h3v1h-3zM338 536h3v1h-3zM344 536h3v1h-3zM350 536h3v1h-3zM356 536h3v1h-3zM362 536h3v1h-3zM368 536h3v1h-3zM374 536h3v1h-3zM380 536h3v1h-3zM386 536h3v1h-3zM392 536h3v1h-3zM398 536h3v1h-3zM404 536h3v1h-3zM410 536h3v1h-3zM416 536h3v1h-3zM422 536h3v1h-3zM428 536h3v1h-3zM434 536h3v1h-3zM440 536h3v1h-3zM446 536h3v1h-3zM452 536h3v1h-3zM458 536h3v1h-3zM464 536h3v1h-3zM470 536h3v1h-3zM476 536h3v1h-3zM482 536h3v1h-3zM488 536h3v1h-3zM494 536h3v1h-3zM500 536h3v1h-3zM506 536h3v1h-3zM512 536h3v1h-3zM518 536h3v1h-3zM524 536h3v1h-3zM530 536h3v1h-3zM536 536h3v1h-3zM542 536h3v1h-3zM548 536h3v1h-3zM554 536h3v1h-3zM560 536h3v1h-3zM566 536h3v1h-3zM572 536h3v1h-3zM578 536h3v1h-3zM584 536h3v1h-3zM590 536h3v1h-3zM596 536h3v1h-3zM602 536h3v1h-3zM608 536h3v1h-3zM614 536h3v1h-3zM620 536h3v1h-3zM626 536h3v1h-3zM632 536h3v1h-3zM638 536h3v1h-3zM644 536h3v1h-3zM650 536h3v1h-3zM656 536h3v1h-3zM662 536h3v1h-3zM668 536h3v1h-3zM674 536h3v1h-3z" fill="#c0c0c0"/>
<path d="M14 474h3v1h-3zM20 474h3v1h-3zM26 474h3v1h-3zM32 474h3v1h-3zM38 474h3v1h-3zM44 474h3v1h-3zM50 474h3v1h-3zM56 474h3v1h-3zM62 474h3v1h-3zM68 474h3v1h-3zM74 474h3v1h-3zM80 474h3v1h-3zM86 474h3v1h-3zM92 474h3v1h-3zM98 474h3v1h-3zM104 474h3v1h-3zM110 474h3v1h-3zM116 474h3v1h-3zM122 474h3v1h-3zM128 474h3v1h-3zM134 474h3v1h-3zM140 474h3v1h-3zM146 474h3v1h-3zM152 474h3v1h-3zM158 474h3v1h-3zM164 474h3v1h-3zM170 474h3v1h-3zM176 474h3v1h-3zM182 474h3v1h-3zM188 474h3v1h-3zM194 474h3v1h-3zM200 474h3v1h-3zM206 474h3v1h-3zM212 474h3v1h-3zM218 474h3v1h-3zM224 474h3v1h-3zM230 474h3v1h-3zM236 474h3v1h-3zM242 474h3v1h-3zM248 474h3v1h-3zM254 474h3v1h-3zM260 474h3v1h-3zM266 474h3v1h-3zM272 474h3v1h-3zM278 474h3v1h-3zM284 474h3v1h-3zM290 474h3v1h-3zM296 474h3v1h-3zM302 474h3v1h-3zM308 474h3v1h-3zM314 474h3v1h-3zM320 474h3v1h-3zM326 474h3v1h-3zM332 474h3v1h-3zM338 474h3v1h-3zM344 474h3v1h-3zM350 474h3v1h-3zM356 474h3v1h-3zM362 474h3v1h-3zM368 474h3v1h-3zM374 474h3v1h-3zM380 474h3v1h-3zM386 474h3v1h-3zM392 474h3v1h-3zM398 474h3v1h-3zM404 474h3v1h-3zM410 474h3v1h-3zM416 474h3v1h-3zM422 474h3v1h-3zM428 474h3v1h-3zM434 474h3v1h-3zM440 474h3v1h-3zM446 474h3v1h-3zM452 474h3v1h-3zM458 474h3v1h-3zM464 474h3v1h-3zM470 474h3v1h-3zM476 474h3v1h-3zM482 474h3v1h-3zM488 474h3v1h-3zM494 474h3v1h-3zM500 474h3v1h-3zM506 474h3v1h-3zM512 474h3v1h-3zM518 474h3v1h-3zM524 474h3v1h-3zM530 474h3v1h-3zM536 474h3v1h-3zM542 474h3v1h-3zM548 474h3v1h-3zM554 474h3v1h-3zM560 474h3v1h-3zM566 474h3v1h-3zM572 474h3v1h-3zM578 474h3v1h-3zM584 474h3v1h-3zM590 474h3v1h-3zM596 474h3v1h-3zM602 474h3v1h-3zM608 474h3v1h-3zM614 474h3v1h-3zM620 474h3v1h-3zM626 474h3v1h-3zM632 474h3v1h-3zM638 474h3v1h-3zM644 474h3v1h-3zM650 474h3v1h-3zM656 474h3v1h-3zM662 474h3v1h-3zM668 474h3v1h-3zM674 474h3v1h-3z" fill="#778899"/>
<rect x="13" y="342" width="667" height="1" fill="#778899"/>
<path d="M12 34h669v1h-669zM12 34h1v344h-1zM680 34h1v344h-1zM12 377h669v1h-669z" fill="#fff"/>
<path d="M12 379h669v1h-669zM12 379h1v174h-1zM680 379h1v174h-1zM12 552h669v1h-669z" fill="#fff"/>
<path d="M681 39h2v1h-2zM681 72h2v1h-2zM681 106h2v1h-2zM681 139h2v1h-2zM681 173h2v1h-2zM681 206h2v1h-2zM681 239h2v1h-2zM681 273h2v1h-2zM681 306h2v1h-2zM681 340h2v1h-2zM681 373h2v1h-2zM681 381h1v1h-1zM681 474h1v1h-1zM681 551h1v1h-1zM13 553h1v3h-1zM77 553h1v3h-1zM141 553h1v3h-1zM205 553h1v3h-1zM269 553h1v3h-1zM333 553h1v3h-1zM397 553h1v3h-1zM461 553h1v3h-1zM525 553h1v3h-1zM589 553h1v3h-1zM653 553h1v3h-1z" fill="#fff"/>
<path d="M13 547L13 552L19 552Z" fill="#778899" shape-rendering="auto"/>
<clipPath id="mc"><rect x="13" y="35" width="667" height="342"/></clipPath>
<g clip-path="url(#mc)"><path d="M13 137h1v18h-1zM11 137h5v14h-5zM21 136h1v18h-1zM19 138h5v8h-5zM29 131h1v18h-1zM27 134h5v13h-5zM37 123h1v11h-1zM35 132h5v2h-5zM45 123h1v12h-1zM43 125h5v8h-5zM53 125h1v7h-1zM51 126h5v3h-5zM61 120h1v10h-1zM59 128h5v2h-5zM69 123h1v18h-1zM67 129h5v10h-5zM77 128h1v11h-1zM75 133h5v6h-5zM85 125h1v11h-1zM83 125h5v9h-5zM93 118h1v13h-1zM91 125h5v4h-5zM101 120h1v9h-1zM99 120h5v9h-5zM109 120h1v19h-1zM107 120h5v14h-5zM117 131h1v13h-1zM115 133h5v8h-5zM125 140h1v18h-1zM123 140h5v6h-5zM133 125h1v21h-1zM131 127h5v19h-5zM141 107h1v24h-1zM139 124h5v4h-5zM149 122h1v20h-1zM147 125h5v14h-5zM157 132h1v12h-1zM155 138h5v1h-5zM165 135h1v20h-1zM163 138h5v17h-5zM173 131h1v24h-1zM171 138h5v17h-5zM181 116h1v27h-1zM179 116h5v24h-5zM189 106h1v15h-1zM187 106h5v11h-5zM197 77h1v31h-1zM195 92h5v14h-5zM205 93h1v16h-1zM203 93h5v16h-5zM213 102h1v25h-1zM211 108h5v15h-5zM221 109h1v18h-1zM219 113h5v10h-5zM229 109h1v16h-1zM227 112h5v2h-5zM237 103h1v14h-1zM235 104h5v13h-5zM245 102h1v17h-1zM243 104h5v5h-5zM253 102h1v21h-1zM251 108h5v12h-5zM261 100h1v23h-1zM259 112h5v8h-5zM269 99h1v22h-1zM267 111h5v7h-5zM277 64h1v55h-1zM275 85h5v34h-5zM285 64h1v24h-1zM283 72h5v14h-5zM293 64h1v47h-1zM291 69h5v25h-5zM301 82h1v37h-1zM299 92h5v27h-5zM309 116h1v47h-1zM307 119h5v44h-5zM317 162h1v33h-1zM315 162h5v22h-5zM325 164h1v29h-1zM323 164h5v21h-5zM333 155h1v23h-1zM331 165h5v4h-5zM341 165h1v17h-1zM339 167h5v2h-5zM349 167h1v23h-1zM347 167h5v14h-5zM357 168h1v36h-1zM355 181h5v17h-5zM365 197h1v20h-1zM363 197h5v9h-5zM373 179h1v38h-1zM371 184h5v22h-5zM381 165h1v30h-1zM379 165h5v20h-5zM389 147h1v37h-1zM387 155h5v11h-5zM397 154h1v32h-1zM395 156h5v15h-5zM405 169h1v52h-1zM403 171h5v40h-5zM413 202h1v30h-1zM411 210h5v12h-5zM421 215h1v18h-1zM419 221h5v3h-5zM429 216h1v37h-1zM427 223h5v27h-5zM437 238h1v23h-1zM435 238h5v12h-5zM445 227h1v18h-1zM443 227h5v12h-5zM453 227h1v14h-1zM451 227h5v9h-5zM461 232h1v21h-1zM459 234h5v14h-5zM469 244h1v25h-1zM467 245h5v3h-5zM477 235h1v13h-1zM475 239h5v7h-5zM485 239h1v13h-1zM483 239h5v9h-5zM493 246h1v19h-1zM491 248h5v16h-5zM501 236h1v32h-1zM499 239h5v25h-5zM509 240h1v22h-1zM507 240h5v21h-5zM517 260h1v10h-1zM515 261h5v5h-5zM525 265h1v14h-1zM523 265h5v14h-5zM533 277h1v17h-1zM531 278h5v8h-5zM541 271h1v18h-1zM539 273h5v13h-5zM549 272h1v17h-1zM547 273h5v13h-5zM557 280h1v9h-1zM555 285h5v1h-5zM565 283h1v12h-1zM563 286h5v7h-5zM573 281h1v16h-1zM571 282h5v12h-5zM581 280h1v17h-1zM579 283h5v12h-5zM589 288h1v13h-1zM587 295h5v1h-5zM597 292h1v15h-1zM595 295h5v9h-5zM605 295h1v10h-1zM603 297h5v7h-5zM613 281h1v22h-1zM611 290h5v10h-5zM621 289h1v13h-1zM619 289h5v6h-5zM629 293h1v20h-1zM627 293h5v17h-5zM637 306h1v10h-1zM635 307h5v2h-5zM645 306h1v12h-1zM643 309h5v9h-5zM653 317h1v11h-1zM651 317h5v10h-5zM661 326h1v16h-1zM659 326h5v6h-5zM669 328h1v29h-1zM667 331h5v25h-5zM677 340h1v19h-1zM675 341h5v15h-5z" fill="#00ff00"/>
<path d="M20 139h3v6h-3zM52 127h3v1h-3zM68 130h3v8h-3zM92 126h3v2h-3zM108 121h3v12h-3zM116 134h3v6h-3zM124 141h3v4h-3zM148 126h3v12h-3zM164 139h3v15h-3zM204 94h3v14h-3zM212 109h3v13h-3zM244 105h3v3h-3zM252 109h3v10h-3zM268 112h3v5h-3zM292 70h3v23h-3zM300 93h3v25h-3zM308 120h3v42h-3zM316 163h3v20h-3zM332 166h3v2h-3zM348 168h3v12h-3zM356 182h3v15h-3zM364 198h3v7h-3zM396 157h3v13h-3zM404 172h3v38h-3zM412 211h3v10h-3zM420 222h3v1h-3zM428 224h3v25h-3zM452 228h3v7h-3zM460 235h3v12h-3zM468 246h3v1h-3zM484 240h3v7h-3zM492 249h3v14h-3zM508 241h3v19h-3zM516 262h3v3h-3zM524 266h3v12h-3zM532 279h3v6h-3zM548 274h3v11h-3zM564 287h3v5h-3zM580 284h3v10h-3zM596 296h3v7h-3zM620 290h3v4h-3zM628 294h3v15h-3zM644 310h3v7h-3zM652 318h3v8h-3zM660 327h3v4h-3zM668 332h3v23h-3z" fill="#fff"/><path d="M12 138h3v12h-3zM28 135h3v11h-3zM44 126h3v6h-3zM76 134h3v4h-3zM84 126h3v7h-3zM100 121h3v7h-3zM132 128h3v17h-3zM140 125h3v2h-3zM172 139h3v15h-3zM180 117h3v22h-3zM188 107h3v9h-3zM196 93h3v12h-3zM220 114h3v8h-3zM236 105h3v11h-3zM260 113h3v6h-3zM276 86h3v32h-3zM284 73h3v12h-3zM324 165h3v19h-3zM372 185h3v20h-3zM380 166h3v18h-3zM388 156h3v9h-3zM436 239h3v10h-3zM444 228h3v10h-3zM476 240h3v5h-3zM500 240h3v23h-3zM540 274h3v11h-3zM572 283h3v10h-3zM604 298h3v5h-3zM612 291h3v8h-3zM676 342h3v13h-3z" fill="#000"/></g>
</g>
<clipPath id="ic"><rect x="13" y="380" width="667" height="172"/></clipPath>
<g clip-path="url(#ic)">
<polyline points="13.5,528 21.5,539 29.5,534 37.5,504 45.5,474 53.5,426 61.5,411 69.5,432 77.5,449 85.5,440 93.5,454 101.5,449 109.5,473 117.5,486 125.5,502 133.5,484 141.5,473 149.5,494 157.5,494 165.5,509 173.5,486 181.5,448 189.5,438 197.5,431 205.5,417 213.5,417 221.5,425 229.5,442 237.5,447 245.5,471 253.5,504 261.5,493 269.5,481 277.5,443 285.5,443 293.5,433 301.5,458 309.5,483 317.5,501 325.5,529 333.5,539 341.5,541 349.5,537 357.5,537 365.5,537 373.5,533 381.5,494 389.5,474 397.5,461 405.5,478 413.5,494 421.5,510 429.5,526 437.5,540 445.5,545 453.5,540 461.5,534 469.5,526 477.5,515 485.5,505 493.5,504 501.5,526 509.5,526 517.5,526 525.5,526 533.5,538 541.5,541 549.5,542 557.5,545 565.5,548 573.5,533 581.5,533 589.5,533 597.5,537 605.5,542 613.5,523 621.5,508 629.5,510 637.5,518 645.5,518 653.5,528 661.5,539 669.5,547 677.5,548" fill="none" stroke="#ff0000" stroke-width="2" stroke-linejoin="round" shape-rendering="crispEdges"/>
<polyline points="13.5,465 21.5,476 29.5,483 37.5,494 45.5,498 53.5,505 61.5,505 69.5,505 77.5,505 85.5,494 93.5,488 101.5,487 109.5,492 117.5,499 125.5,508 133.5,499 141.5,488 149.5,486 157.5,491 165.5,496 173.5,494 181.5,478 189.5,463 197.5,454 205.5,447 213.5,447 221.5,442 229.5,441 237.5,436 245.5,432 253.5,428 261.5,425 269.5,424 277.5,421 285.5,418 293.5,416 301.5,419 309.5,434 317.5,448 325.5,463 333.5,476 341.5,488 349.5,499 357.5,509 365.5,518 373.5,525 381.5,530 389.5,530 397.5,531 405.5,532 413.5,536 421.5,539 429.5,540 437.5,541 445.5,542 453.5,542 461.5,542 469.5,542 477.5,542 485.5,542 493.5,542 501.5,542 509.5,542 517.5,542 525.5,545 533.5,545 541.5,546 549.5,546 557.5,546 565.5,547 573.5,548 581.5,548 589.5,548 597.5,548 605.5,547 613.5,546 621.5,545 629.5,545 637.5,547 645.5,548 653.5,548 661.5,548 669.5,548 677.5,548" fill="none" stroke="#00ffff" stroke-width="2" stroke-linejoin="round" shape-rendering="crispEdges"/>
<polyline points="13.5,491 21.5,491 29.5,488 37.5,485 45.5,482 53.5,479 61.5,475 69.5,474 77.5,474 85.5,477 93.5,477 101.5,469 109.5,466 117.5,465 125.5,464 133.5,459 141.5,452 149.5,455 157.5,455 165.5,461 173.5,467 181.5,467 189.5,465 197.5,464 205.5,464 213.5,464 221.5,464 229.5,461 237.5,459 245.5,459 253.5,458 261.5,458 269.5,455 277.5,448 285.5,444 293.5,439 301.5,439 309.5,445 317.5,451 325.5,457 333.5,461 341.5,466 349.5,471 357.5,475 365.5,479 373.5,483 381.5,486 389.5,487 397.5,490 405.5,494 413.5,499 421.5,503 429.5,507 437.5,511 445.5,514 453.5,517 461.5,520 469.5,523 477.5,525 485.5,528 493.5,530 501.5,533 509.5,535 517.5,537 525.5,538 533.5,539 541.5,542 549.5,543 557.5,545 565.5,546 573.5,547 581.5,548 589.5,548 597.5,548 605.5,549 613.5,549 621.5,549 629.5,549 637.5,549 645.5,549 653.5,550 661.5,550 669.5,550 677.5,550" fill="none" stroke="#ffff00" stroke-width="2" stroke-linejoin="round" shape-rendering="crispEdges"/>
</g>
<path d="M387 118H392V131.5L399 125V132.5L389.5 141.5L380 132.5V125L387 131.5Z" fill="#ffff00"/>
<polygon points="380.60,147.90 382.54,152.93 387.92,153.22 383.74,156.62 385.13,161.83 380.60,158.90 376.07,161.83 377.46,156.62 373.28,153.22 378.66,152.93" fill="#ffff00"/>
<rect x="682" y="337" width="41" height="11" fill="#fff" shape-rendering="crispEdges"/>
<g class="t">
<text x="29.50" y="23" font-size="12.6" textLength="66.03" lengthAdjust="spacingAndGlyphs" fill="#1e1e1e" stroke="#1e1e1e" stroke-width="0" >USDCAD,M5</text>
<text x="28.00" y="46" font-size="9.8" textLength="57.51" lengthAdjust="spacingAndGlyphs" fill="#fff" stroke="#fff" stroke-width="0.2" >USDCAD,M5</text>
<text x="91.10" y="46" font-size="9.8" textLength="33.70" lengthAdjust="spacingAndGlyphs" fill="#fff" stroke="#fff" stroke-width="0.2" >1.25711</text>
<text x="127.10" y="46" font-size="9.8" textLength="34.16" lengthAdjust="spacingAndGlyphs" fill="#fff" stroke="#fff" stroke-width="0.2" >1.25719</text>
<text x="163.10" y="46" font-size="9.8" textLength="33.67" lengthAdjust="spacingAndGlyphs" fill="#fff" stroke="#fff" stroke-width="0.2" >1.25710</text>
<text x="199.10" y="46" font-size="9.8" textLength="33.16" lengthAdjust="spacingAndGlyphs" fill="#fff" stroke="#fff" stroke-width="0.2" >1.25712</text>
<text x="17.00" y="393" font-size="9.8" textLength="43.53" lengthAdjust="spacingAndGlyphs" fill="#fff" stroke="#fff" stroke-width="0.2" >R(9,26,52)</text>
<text x="63.00" y="393" font-size="9.8" textLength="19.07" lengthAdjust="spacingAndGlyphs" fill="#fff" stroke="#fff" stroke-width="0.2" >12.9</text>
<text x="84.00" y="393" font-size="9.8" textLength="21.12" lengthAdjust="spacingAndGlyphs" fill="#fff" stroke="#fff" stroke-width="0.2" >-50.0</text>
<text x="107.50" y="393" font-size="9.8" textLength="22.55" lengthAdjust="spacingAndGlyphs" fill="#fff" stroke="#fff" stroke-width="0.2" >-48.4</text>
<text x="12.00" y="565" font-size="9.8" textLength="50.51" lengthAdjust="spacingAndGlyphs" fill="#fff" stroke="#fff" stroke-width="0.2" >11 Jan 2022</text>
<text x="76.50" y="565" font-size="9.8" textLength="52.52" lengthAdjust="spacingAndGlyphs" fill="#fff" stroke="#fff" stroke-width="0.2" >11 Jan 14:35</text>
<text x="140.50" y="565" font-size="9.8" textLength="52.52" lengthAdjust="spacingAndGlyphs" fill="#fff" stroke="#fff" stroke-width="0.2" >11 Jan 15:15</text>
<text x="204.50" y="565" font-size="9.8" textLength="52.52" lengthAdjust="spacingAndGlyphs" fill="#fff" stroke="#fff" stroke-width="0.2" >11 Jan 15:55</text>
<text x="268.50" y="565" font-size="9.8" textLength="52.52" lengthAdjust="spacingAndGlyphs" fill="#fff" stroke="#fff" stroke-width="0.2" >11 Jan 16:35</text>
<text x="332.50" y="565" font-size="9.8" textLength="52.52" lengthAdjust="spacingAndGlyphs" fill="#fff" stroke="#fff" stroke-width="0.2" >11 Jan 17:15</text>
<text x="396.50" y="565" font-size="9.8" textLength="52.52" lengthAdjust="spacingAndGlyphs" fill="#fff" stroke="#fff" stroke-width="0.2" >11 Jan 17:55</text>
<text x="460.50" y="565" font-size="9.8" textLength="52.52" lengthAdjust="spacingAndGlyphs" fill="#fff" stroke="#fff" stroke-width="0.2" >11 Jan 18:35</text>
<text x="524.50" y="565" font-size="9.8" textLength="52.52" lengthAdjust="spacingAndGlyphs" fill="#fff" stroke="#fff" stroke-width="0.2" >11 Jan 19:15</text>
<text x="588.50" y="565" font-size="9.8" textLength="52.52" lengthAdjust="spacingAndGlyphs" fill="#fff" stroke="#fff" stroke-width="0.2" >11 Jan 19:55</text>
<text x="652.50" y="565" font-size="9.8" textLength="52.52" lengthAdjust="spacingAndGlyphs" fill="#fff" stroke="#fff" stroke-width="0.2" >11 Jan 20:35</text>
<text x="686.00" y="43" font-size="9.8" textLength="33.57" lengthAdjust="spacingAndGlyphs" fill="#fff" stroke="#fff" stroke-width="0.2" >1.26710</text>
<text x="686.00" y="76" font-size="9.8" textLength="33.57" lengthAdjust="spacingAndGlyphs" fill="#fff" stroke="#fff" stroke-width="0.2" >1.26600</text>
<text x="686.00" y="110" font-size="9.8" textLength="33.57" lengthAdjust="spacingAndGlyphs" fill="#fff" stroke="#fff" stroke-width="0.2" >1.26490</text>
<text x="686.00" y="143" font-size="9.8" textLength="33.57" lengthAdjust="spacingAndGlyphs" fill="#fff" stroke="#fff" stroke-width="0.2" >1.26380</text>
<text x="686.00" y="177" font-size="9.8" textLength="33.57" lengthAdjust="spacingAndGlyphs" fill="#fff" stroke="#fff" stroke-width="0.2" >1.26270</text>
<text x="686.00" y="210" font-size="9.8" textLength="33.57" lengthAdjust="spacingAndGlyphs" fill="#fff" stroke="#fff" stroke-width="0.2" >1.26160</text>
<text x="686.00" y="243" font-size="9.8" textLength="33.57" lengthAdjust="spacingAndGlyphs" fill="#fff" stroke="#fff" stroke-width="0.2" >1.26050</text>
<text x="686.00" y="277" font-size="9.8" textLength="33.57" lengthAdjust="spacingAndGlyphs" fill="#fff" stroke="#fff" stroke-width="0.2" >1.25940</text>
<text x="686.00" y="310" font-size="9.8" textLength="33.57" lengthAdjust="spacingAndGlyphs" fill="#fff" stroke="#fff" stroke-width="0.2" >1.25830</text>
<text x="686.00" y="377" font-size="9.8" textLength="33.57" lengthAdjust="spacingAndGlyphs" fill="#fff" stroke="#fff" stroke-width="0.2" >1.25610</text>
<text x="686.00" y="346" font-size="9.8" textLength="33.57" lengthAdjust="spacingAndGlyphs" fill="#000" stroke="#000" stroke-width="0.2" >1.25712</text>
<text x="683.50" y="390" font-size="9.8" textLength="16.09" lengthAdjust="spacingAndGlyphs" fill="#fff" stroke="#fff" stroke-width="0.2" >120</text>
<text x="683.00" y="400" font-size="9.8" textLength="16.14" lengthAdjust="spacingAndGlyphs" fill="#fff" stroke="#fff" stroke-width="0.2" >100</text>
<text x="683.50" y="416" font-size="9.8" textLength="10.25" lengthAdjust="spacingAndGlyphs" fill="#fff" stroke="#fff" stroke-width="0.2" >80</text>
<text x="683.00" y="439" font-size="9.8" textLength="11.02" lengthAdjust="spacingAndGlyphs" fill="#fff" stroke="#fff" stroke-width="0.2" >50</text>
<text x="684.00" y="478" font-size="9.8" textLength="19.00" lengthAdjust="spacingAndGlyphs" fill="#fff" stroke="#fff" stroke-width="0.2" >0.00</text>
<text x="683.00" y="517" font-size="9.8" textLength="13.48" lengthAdjust="spacingAndGlyphs" fill="#fff" stroke="#fff" stroke-width="0.2" >-50</text>
<text x="683.00" y="540" font-size="9.8" textLength="14.00" lengthAdjust="spacingAndGlyphs" fill="#fff" stroke="#fff" stroke-width="0.2" >-80</text>
<text x="683.50" y="549" font-size="9.8" textLength="19.00" lengthAdjust="spacingAndGlyphs" fill="#fff" stroke="#fff" stroke-width="0.2" >-100</text>
</g>
<path d="M16 41h7l-3.5 4z" fill="#fff"/>
<g shape-rendering="crispEdges"><rect x="11.5" y="11.5" width="11" height="8" fill="#fffef8" stroke="#4a8cf0"/><rect x="11.5" y="11.5" width="11" height="8" fill="none" stroke="#3f8a78" stroke-dasharray="1 2"/><rect x="14.5" y="16.5" width="10" height="8" fill="#fffef8" stroke="#4a8cf0"/><rect x="14.5" y="16.5" width="10" height="8" fill="none" stroke="#3f8a78" stroke-dasharray="1 2"/></g><path d="M16.2 19.3L18.3 22.4L20.4 19.3L22.4 22.4" fill="none" stroke="#4a8cf0" stroke-width="1.1"/><path d="M13.2 15.4L14.5 14.2L15.9 15.4L17.6 14.4L19 15.6" fill="none" stroke="#4a8cf0" stroke-width="1.1"/>
<rect x="626.5" y="9.5" width="31" height="17" rx="2" fill="url(#btn)" stroke="#4f5d70"/>
<rect x="627.5" y="10.5" width="29" height="15" rx="1" fill="none" stroke="#e6f0fa" stroke-opacity="0.7"/>
<rect x="660.5" y="9.5" width="31" height="17" rx="2" fill="url(#btn)" stroke="#4f5d70"/>
<rect x="661.5" y="10.5" width="29" height="15" rx="1" fill="none" stroke="#e6f0fa" stroke-opacity="0.7"/>
<rect x="694.5" y="9.5" width="31" height="17" rx="2" fill="url(#cls)" stroke="#561822"/>
<rect x="695.5" y="10.5" width="29" height="15" rx="1" fill="none" stroke="#f4c0b4" stroke-opacity="0.7"/>
<rect x="636.5" y="17.5" width="10" height="4" rx="1" fill="#eeeeee" stroke="#383c48"/>
<rect x="670.5" y="13.5" width="10" height="8" rx="1" fill="#f2f2f2" stroke="#383c48"/>
<rect x="673.5" y="16.5" width="4" height="2" fill="#7c9cc4" stroke="#383c48"/>
<path d="M704.5 13.5H708.2L709.8 15.8L711.4 13.5H715L711.8 17.6L715 21.6H711.4L709.8 19.4L708.2 21.6H704.5L707.8 17.6Z" fill="#f0f0f0" stroke="#3c4150" stroke-width="1" stroke-linejoin="round"/>
</svg></body></html>
